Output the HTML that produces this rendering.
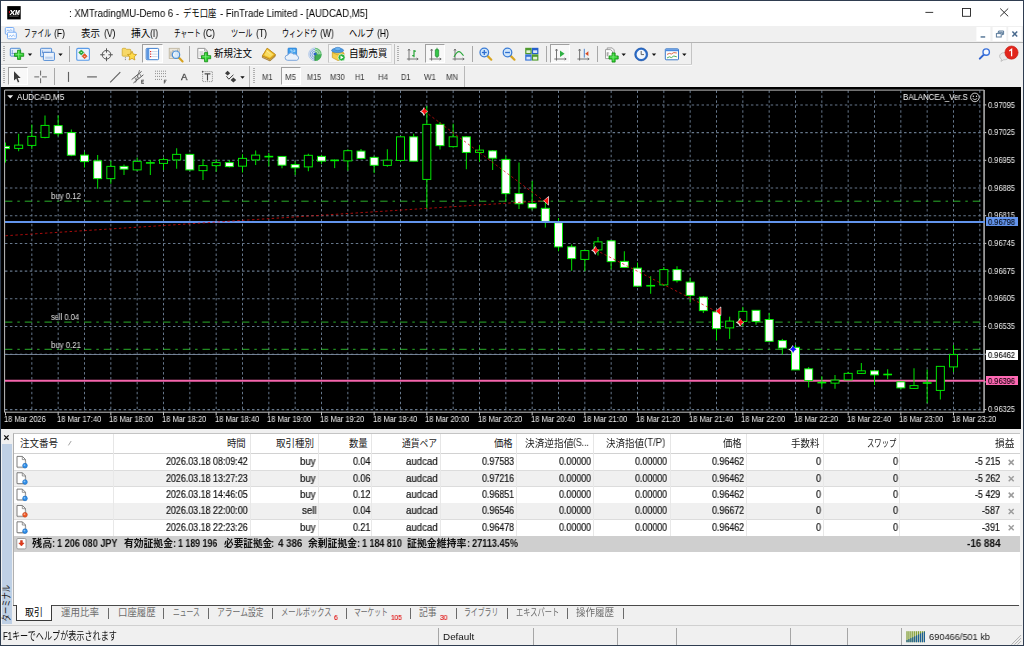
<!DOCTYPE html><html lang="ja"><head><meta charset="utf-8"><title>MetaTrader 4 - AUDCAD,M5</title><style>
html,body{margin:0;padding:0}
body{width:1024px;height:646px;position:relative;overflow:hidden;background:#f0f0f0;font-family:"Liberation Sans",sans-serif;}
.t{position:absolute;white-space:pre;transform-origin:0 50%;will-change:transform;}
.j{position:absolute;white-space:pre;transform-origin:0 50%;font-family:"Liberation Sans","Noto Sans CJK JP",sans-serif;}
.abs{position:absolute}
.ic{position:absolute;overflow:visible;display:block}
.vsep{position:absolute;width:1px;background:#a8a8a8}
.grip{position:absolute;width:2px;background:repeating-linear-gradient(to bottom,#b0b0b0 0,#b0b0b0 1px,transparent 1px,transparent 2px)}
.pressed{position:absolute;background:#f8f8f8;border-top:1px solid #a0a0a0;border-left:1px solid #a0a0a0;border-right:1px solid #fff;border-bottom:1px solid #fff;box-sizing:border-box}
</style></head><body>
<div class="abs" style="left:0.00px;top:0.00px;width:1024.00px;height:646.00px;background:#f0f0f0;"></div>
<div class="abs" style="left:0.00px;top:0.00px;width:1024.00px;height:25.50px;background:#ffffff;"></div>
<svg class="ic" style="left:7px;top:5.5px" width="14" height="14" viewBox="0 0 14 14"><rect x="0.2" y="0.1" width="13.5" height="13.3" fill="#000"/><path d="M3.0 4.1 L4.6 4.1 L5.6 5.7 L7.2 4.1 L8.6 4.1 L6.4 6.5 L7.8 8.9 L6.2 8.9 L5.3 7.3 L3.8 8.9 L2.3 8.9 L4.6 6.4 Z" fill="#fff"/><path d="M7.9 8.9 L8.8 4.1 L10.1 4.1 L10.4 6.7 L11.7 4.1 L13 4.1 L12.1 8.9 L11.1 8.9 L11.7 6 L10.3 8.9 L9.6 8.9 L9.3 6 L8.8 8.9 Z" fill="#fff"/><rect x="1.9" y="5" width="1" height="2.2" fill="#e01020"/><rect x="2.4" y="9.7" width="9.2" height="0.7" fill="#8a8a8a"/></svg>
<span class="t " style="left:69.30px;top:8.94px;font-size:10.30px;line-height:10.30px;color:#000;transform:scaleX(0.9369);">: XMTradingMU-Demo 6 -</span>
<span class="j" style="left:183.40px;top:8.89px;font-size:9.70px;line-height:9.70px;color:#000;transform:scaleX(0.861);">デモ口座</span>
<span class="t " style="left:220.00px;top:8.94px;font-size:10.30px;line-height:10.30px;color:#000;transform:scaleX(0.9311);">- FinTrade Limited - [AUDCAD,M5]</span>
<svg class="ic" style="left:915px;top:1px" width="108" height="24" viewBox="0 0 108 24"><path d="M10.4 11.4 H18.2" stroke="#222" stroke-width="0.9" fill="none"/><rect x="47.5" y="7.5" width="8" height="7.8" stroke="#222" stroke-width="0.9" fill="none"/><path d="M85.2 7.5 L93.2 15.3 M93.2 7.5 L85.2 15.3" stroke="#222" stroke-width="0.95" fill="none"/></svg>
<div class="abs" style="left:0.00px;top:25.50px;width:1024.00px;height:16.80px;background:#f0f0f0;"></div>
<div class="abs" style="left:0.00px;top:42.20px;width:1024.00px;height:0.90px;background:#b4b4b4;"></div>
<svg class="ic" style="left:4px;top:26px" width="14" height="15" viewBox="0 0 14 15"><rect x="1.3" y="1.5" width="8.6" height="6.8" rx="1.1" fill="#f4f8ff" stroke="#5b9bf2" stroke-width="0.8"/><path d="M2.6 5.4 l1.4 -1.6 l1.4 1.4 l1.4 -1.7 l1.6 1.6" stroke="#6aa3f0" stroke-width="0.7" fill="none"/><rect x="3.5" y="6.2" width="8.8" height="6.6" rx="1.1" fill="#f8fbff" stroke="#5b9bf2" stroke-width="0.8"/><path d="M4.9 10.9 l1.4 -1.7 l1.4 1.5 l1.5 -1.8 l1.6 1.5" stroke="#6aa3f0" stroke-width="0.7" fill="none"/></svg>
<span class="j" style="left:23.80px;top:29.02px;font-size:9.90px;line-height:9.90px;color:#000;transform:scaleX(0.687);">ファイル</span>
<span class="t " style="left:54.28px;top:28.94px;font-size:10.30px;line-height:10.30px;color:#000;transform:scaleX(0.8300);">(F)</span>
<span class="j" style="left:81.00px;top:29.02px;font-size:9.90px;line-height:9.90px;color:#000;transform:scaleX(0.960);">表示</span>
<span class="t " style="left:103.60px;top:28.94px;font-size:10.30px;line-height:10.30px;color:#000;transform:scaleX(0.8300);">(V)</span>
<span class="j" style="left:131.00px;top:29.02px;font-size:9.90px;line-height:9.90px;color:#000;transform:scaleX(0.990);">挿入</span>
<span class="t " style="left:150.43px;top:28.94px;font-size:10.30px;line-height:10.30px;color:#000;transform:scaleX(0.8300);">(I)</span>
<span class="j" style="left:173.50px;top:29.02px;font-size:9.90px;line-height:9.90px;color:#000;transform:scaleX(0.677);">チャート</span>
<span class="t " style="left:203.13px;top:28.94px;font-size:10.30px;line-height:10.30px;color:#000;transform:scaleX(0.8300);">(C)</span>
<span class="j" style="left:231.00px;top:29.02px;font-size:9.90px;line-height:9.90px;color:#000;transform:scaleX(0.727);">ツール</span>
<span class="t " style="left:255.58px;top:28.94px;font-size:10.30px;line-height:10.30px;color:#000;transform:scaleX(0.8300);">(T)</span>
<span class="j" style="left:281.50px;top:29.02px;font-size:9.90px;line-height:9.90px;color:#000;transform:scaleX(0.715);">ウィンドウ</span>
<span class="t " style="left:319.74px;top:28.94px;font-size:10.30px;line-height:10.30px;color:#000;transform:scaleX(0.8300);">(W)</span>
<span class="j" style="left:349.00px;top:29.02px;font-size:9.90px;line-height:9.90px;color:#000;transform:scaleX(0.828);">ヘルプ</span>
<span class="t " style="left:377.13px;top:28.94px;font-size:10.30px;line-height:10.30px;color:#000;transform:scaleX(0.8300);">(H)</span>
<svg class="ic" style="left:975px;top:26px" width="48" height="16" viewBox="0 0 48 16"><rect x="1.4" y="1" width="14" height="14" fill="#fff"/><rect x="17.6" y="1" width="13.8" height="14" fill="#fff"/><rect x="33.2" y="1" width="13.4" height="14" fill="#fff"/><rect x="5.6" y="10.2" width="4.6" height="1.5" fill="#5a7a9a"/><path d="M22.6 6.3 H27.4 V9.2 M23.6 6.3 V5 H28.6 V8.4 H27.4" stroke="#5a7a9a" stroke-width="1" fill="none"/><rect x="21.4" y="7.6" width="4.8" height="3.4" fill="#fff" stroke="#5a7a9a" stroke-width="1"/><path d="M37.4 5.6 L42.2 10.6 M42.2 5.6 L37.4 10.6" stroke="#4a6a8e" stroke-width="1.5" fill="none"/></svg>
<div class="abs" style="left:0.00px;top:43.10px;width:1024.00px;height:43.80px;background:#f0f0f0;"></div>
<div class="abs" style="left:0.00px;top:64.00px;width:692.00px;height:0.90px;background:#d2d2d2;"></div>
<div class="abs" style="left:0.00px;top:64.90px;width:692.00px;height:0.80px;background:#fbfbfb;"></div>
<div class="abs" style="left:691.40px;top:43.30px;width:0.90px;height:21.20px;background:#c4c4c4;"></div>
<div class="abs" style="left:249.30px;top:66.00px;width:0.90px;height:20.50px;background:#b8b8b8;"></div>
<div class="abs" style="left:464.20px;top:66.00px;width:0.90px;height:20.50px;background:#b8b8b8;"></div>
<div class="abs" style="left:393.50px;top:44.00px;width:0.90px;height:19.50px;background:#c0c0c0;"></div>
<div class="pressed" style="left:142.30px;top:44.40px;width:20.70px;height:18.20px"></div>
<div class="pressed" style="left:424.80px;top:44.40px;width:20.30px;height:18.20px"></div>
<div class="pressed" style="left:550.30px;top:44.40px;width:20.20px;height:18.20px"></div>
<div class="pressed" style="left:7.50px;top:66.50px;width:20.30px;height:18.40px"></div>
<div class="pressed" style="left:281.00px;top:66.50px;width:20.00px;height:18.50px"></div>
<div class="abs" style="left:328.1px;top:44.1px;width:64.2px;height:18.7px;box-sizing:border-box;background:#f6f6f6;border:1px solid #c6c6c6;border-right-color:#e4e4e4;border-bottom-color:#e4e4e4"></div>
<div class="grip" style="left:3.0px;top:46.0px;height:15.5px"></div>
<div class="grip" style="left:397.0px;top:46.2px;height:15.8px"></div>
<div class="grip" style="left:3.0px;top:67.5px;height:16.5px"></div>
<div class="grip" style="left:253.0px;top:68.0px;height:16.0px"></div>
<div class="vsep" style="left:69.2px;top:45.6px;height:16.9px"></div>
<div class="vsep" style="left:189.3px;top:45.6px;height:16.9px"></div>
<div class="vsep" style="left:471.7px;top:45.6px;height:16.9px"></div>
<div class="vsep" style="left:545.8px;top:45.6px;height:16.9px"></div>
<div class="vsep" style="left:597.1px;top:45.6px;height:16.9px"></div>
<div class="vsep" style="left:54.3px;top:67.8px;height:17.0px"></div>
<svg class="ic" style="left:0;top:43px" width="1024" height="44" viewBox="0 43 1024 44"><rect x="10.3" y="48.3" width="10" height="7.8" rx="0.8" fill="#e6effc" stroke="#3f7fcf" stroke-width="0.9"/><path d="M12.3 50 v4.5 M11.5 53.5 h3.5" stroke="#5a8ad0" stroke-width="0.7" fill="none"/><path d="M17.55 50.20 h3.10 v3.05 h3.05 v3.10 h-3.05 v3.05 h-3.10 v-3.05 h-3.05 v-3.10 h3.05 z" fill="#2fd02f" stroke="#128a12" stroke-width="0.8" stroke-linejoin="round"/><path d="M18.60 51.10 v7.00 M15.40 54.30 h7.00" stroke="#9af09a" stroke-width="0.7" fill="none" opacity=".8"/><path d="M27.80 53.50 h4.4 l-2.2 2.4z" fill="#111"/><rect x="40.6" y="48.3" width="11" height="8.4" rx="0.8" fill="#dfeafa" stroke="#3f7fcf" stroke-width="0.9"/><rect x="43.4" y="52.3" width="11" height="8.1" rx="0.8" fill="#edf3fc" stroke="#3f7fcf" stroke-width="0.9"/><path d="M42.6 50.3 v3 M42 52.4 h7.5" stroke="#5a8ad0" stroke-width="0.7" fill="none"/><rect x="45.2" y="56.6" width="7.4" height="2.2" fill="#b9cfee"/><path d="M58.30 53.50 h4.4 l-2.2 2.4z" fill="#111"/><rect x="76.7" y="48.4" width="12.7" height="11.9" rx="1.3" fill="#eaf2fd" stroke="#5a9be8" stroke-width="1.1"/><path d="M81.3 49.9 l2.6 2.6 l-2.6 2.6 l-2.6 -2.6z" fill="#22b034" stroke="#158a24" stroke-width="0.5"/><path d="M80.3 52.9 l1 -1.2 l1 1.2z" fill="#c8f8c8"/><path d="M84.6 53.6 l2.6 2.6 l-2.6 2.6 l-2.6 -2.6z" fill="#ea5a26" stroke="#c23c10" stroke-width="0.5"/><path d="M83.6 55.9 l1 1.2 l1 -1.2z" fill="#ffd8c8"/><circle cx="106.5" cy="54.75" r="4.3" fill="none" stroke="#555" stroke-width="1"/><path d="M106.5 48.3 v4.4 M106.5 56.8 v4.4 M100.2 54.75 h4.4 M108.4 54.75 h4.4" stroke="#555" stroke-width="1" fill="none"/><path d="M122.2 49.2 q0-0.9 0.9-0.9 h2.4 l0.9 1 h3.6 q0.8 0 0.8 0.8 v5.3 q0 0.8 -0.8 0.8 h-7 q-0.8 0-0.8-0.8z" fill="#f7d868" stroke="#c9a227" stroke-width="0.7"/><path d="M125.4 57.3 v3.6" stroke="#666" stroke-width="0.8" stroke-dasharray="1 0.8" fill="none"/><path d="M132 51.2 l1.4 3 l3.2 0.4 l-2.4 2.2 l0.7 3.2 l-2.9 -1.6 l-2.9 1.6 l0.7 -3.2 l-2.4 -2.2 l3.2 -0.4z" fill="#ffdc4a" stroke="#c9971a" stroke-width="0.8" stroke-linejoin="round"/><rect x="146.2" y="48.4" width="12.4" height="11.3" rx="0.9" fill="#fff" stroke="#3f7fcf" stroke-width="1"/><rect x="146.7" y="48.9" width="2.6" height="10.3" fill="#5d97e0"/><path d="M151.6 51.6 h6 M151.6 54.1 h6 M151.6 56.6 h6" stroke="#b4c6e0" stroke-width="0.7" fill="none"/><rect x="150" y="51" width="1.2" height="1.2" fill="#e03030"/><rect x="150" y="53.5" width="1.2" height="1.2" fill="#e03030"/><rect x="150" y="56" width="1.2" height="1.2" fill="#e03030"/><rect x="169.2" y="48.3" width="10" height="10.2" fill="#ece6d8" stroke="#b9b09a" stroke-width="0.8"/><path d="M171 56.5 v-5 M173 56.5 v-6.5 M177.6 56.5 v-7" stroke="#8a8a8a" stroke-width="0.7" fill="none"/><path d="M178.8 57.6 L182.6 61.4" stroke="#d6a11e" stroke-width="2.1" stroke-linecap="round" fill="none"/><circle cx="176" cy="54.7" r="3.7" fill="#d6ebff" fill-opacity=".85" stroke="#4a90d8" stroke-width="1.2"/><path d="M175 52.6 a2.4 2.4 0 0 0 -1 3.4" stroke="#fff" stroke-width="0.8" fill="none"/><path d="M197.8 48.4 h7 l2.6 2.5 v7.6 h-9.6z" fill="#fdfdfd" stroke="#8c8c8c" stroke-width="0.9"/><path d="M204.6 48.5 v2.6 h2.7" fill="none" stroke="#8c8c8c" stroke-width="0.7"/><path d="M199.4 52 h4 M199.4 54 h5 M199.4 56 h3" stroke="#9a9a9a" stroke-width="0.7" fill="none"/><path d="M204.55 52.60 h3.10 v3.05 h3.05 v3.10 h-3.05 v3.05 h-3.10 v-3.05 h-3.05 v-3.10 h3.05 z" fill="#2fd02f" stroke="#128a12" stroke-width="0.8" stroke-linejoin="round"/><path d="M205.60 53.50 v7.00 M202.40 56.70 h7.00" stroke="#9af09a" stroke-width="0.7" fill="none" opacity=".8"/><path d="M267.2 48.2 L275.4 54.6 L275.2 56.4 L270 61 L262.3 57.6 L262.4 55.8 Z" fill="#a97a1e" stroke="#8e6210" stroke-width="0.5" stroke-linejoin="round"/><path d="M263 57 L270 60 L274.8 55.8" stroke="#e8d9a8" stroke-width="0.5" fill="none"/><path d="M267.2 48.2 L275.4 54.6 L270 59.2 L262.4 55.8 Z" fill="#ecb926" stroke="#c08a12" stroke-width="0.6" stroke-linejoin="round"/><path d="M267.3 49.6 L273.4 54.4 L269.8 57.4 L264.2 55 Z" fill="#f8dc62"/><path d="M266.4 50.6 L270.6 54 " stroke="#fff3b0" stroke-width="0.9" fill="none" opacity=".8"/><rect x="288" y="48.1" width="8.6" height="7.6" rx="0.8" fill="#3fa0ee" stroke="#2878d0" stroke-width="0.7"/><path d="M290 50 h2 v3.6 M293.2 50 h1.6 v1.6 h-1.6" stroke="#d8f0ff" stroke-width="0.7" fill="none"/><path d="M287.6 60.3 a2.6 2.6 0 0 1 0.2 -5.2 a3.2 3.2 0 0 1 5.6 -1 a2.6 2.6 0 0 1 3.4 1.4 a2.5 2.5 0 0 1 0 4.8z" fill="#eaf1fa" stroke="#6f9ed8" stroke-width="0.9"/><circle cx="315.1" cy="54.3" r="6.5" fill="#dfe8f4"/><path d="M315.1 47.8 a6.5 6.5 0 0 1 0 13 z" fill="#62bd70"/><path d="M315.1 54.3 L321.6 54.3 A6.5 6.5 0 0 1 315.1 60.8 Z" fill="#3fae52"/><path d="M315.1 49.4 a4.9 4.9 0 0 0 0 9.8 M315.1 51.1 a3.2 3.2 0 0 0 0 6.4" stroke="#7ea6dc" stroke-width="1" fill="none"/><path d="M315.1 47.9 a6.4 6.4 0 0 0 0 12.8" stroke="#a9c3e6" stroke-width="0.8" fill="none"/><path d="M315.1 49.4 a4.9 4.9 0 0 1 4.9 4.9 M315.1 51.1 a3.2 3.2 0 0 1 3.2 3.2" stroke="#c4e8ca" stroke-width="0.9" fill="none"/><circle cx="315.1" cy="54" r="1.6" fill="#2a62c8"/><path d="M315 55.2 v5.5" stroke="#2c8a40" stroke-width="1.1"/><path d="M332.3 52.5 L338.4 50.6 L344 53 L344 58.2 L338 60.6 L332.3 57.6 Z" fill="#f4cf4c" stroke="#c79a1c" stroke-width="0.7"/><path d="M332.3 52.5 L338 55 L344 53" stroke="#c79a1c" stroke-width="0.6" fill="none"/><ellipse cx="337.6" cy="50.4" rx="6" ry="2.3" fill="#4e9be0" stroke="#2c72c0" stroke-width="0.6"/><ellipse cx="337.8" cy="49" rx="3.2" ry="1.7" fill="#6cb2ee" stroke="#2c72c0" stroke-width="0.5"/><circle cx="341.6" cy="57.4" r="3.5" fill="#27b33a" stroke="#fff" stroke-width="0.6"/><path d="M340.5 55.6 v3.6 l3 -1.8z" fill="#fff"/><path d="M409 49.2 V60.6 M406.9 59 H418 M408 50.6 l1-1.6 l1 1.6 M416.6 58 l1.6 1 l-1.6 1" stroke="#666" stroke-width="0.9" fill="none"/><path d="M414 50 V57.2 M412.2 55.6 H414 M414 51.2 H415.9" stroke="#27a538" stroke-width="1.2" fill="none"/><path d="M431.6 49.2 V60.6 M429.4 59 H441 M430.6 50.6 l1-1.6 l1 1.6 M439.6 58 l1.6 1 l-1.6 1" stroke="#666" stroke-width="0.9" fill="none"/><path d="M437 47.8 V58" stroke="#1c8a2c" stroke-width="0.9"/><rect x="435.3" y="49.6" width="3.4" height="6.8" rx="0.6" fill="#35c648" stroke="#1c8a2c" stroke-width="0.7"/><path d="M455 49.2 V60.6 M452.6 59 H464 M454 50.6 l1-1.6 l1 1.6 M462.6 58 l1.6 1 l-1.6 1" stroke="#666" stroke-width="0.9" fill="none"/><path d="M454 57 C456 53 457.6 51.4 459.2 51.6 S462 54 463.6 55.6" stroke="#27a538" stroke-width="1.1" fill="none"/><path d="M487.70 56.10 L491.30 59.70" stroke="#d8a522" stroke-width="2.2" stroke-linecap="round"/><circle cx="484.30" cy="52.50" r="4.3" fill="#cfe6fb" stroke="#3a7bd5" stroke-width="1.25"/><path d="M481.90 52.50 h4.8" stroke="#2f6fd0" stroke-width="1.3"/><path d="M484.30 50.10 v4.8" stroke="#2f6fd0" stroke-width="1.3"/><path d="M510.90 56.10 L514.50 59.70" stroke="#d8a522" stroke-width="2.2" stroke-linecap="round"/><circle cx="507.50" cy="52.50" r="4.3" fill="#cfe6fb" stroke="#3a7bd5" stroke-width="1.25"/><path d="M505.10 52.50 h4.8" stroke="#2f6fd0" stroke-width="1.3"/><rect x="525.2" y="47.8" width="6.5" height="6.3" fill="#4f9a2e"/><rect x="526.4" y="50.3" width="4.1" height="2.7" fill="#e4f3d6"/><rect x="531.9" y="47.8" width="6.5" height="6.3" fill="#2660cc"/><rect x="533.1" y="50.3" width="4.1" height="2.7" fill="#d6e4fa"/><rect x="525.2" y="54.3" width="6.5" height="6.3" fill="#3572d6"/><rect x="526.4" y="56.8" width="4.1" height="2.7" fill="#d6e4fa"/><rect x="531.9" y="54.3" width="6.5" height="6.3" fill="#4f9a2e"/><rect x="533.1" y="56.8" width="4.1" height="2.7" fill="#e4f3d6"/><path d="M556.5 49.2 V60.6 M554.3 59 H566 M555.5 50.6 l1-1.6 l1 1.6 M564.6 58 l1.6 1 l-1.6 1" stroke="#666" stroke-width="0.9" fill="none"/><path d="M560 50.4 V57 L564.6 53.7z" fill="#2fb044"/><path d="M579.6 49.2 V60.6 M577.4 59 H589 M578.6 50.6 l1-1.6 l1 1.6 M587.6 58 l1.6 1 l-1.6 1" stroke="#666" stroke-width="0.9" fill="none"/><path d="M584.3 48.8 V57.6" stroke="#3a78c8" stroke-width="0.9"/><path d="M585.2 53.7 l3.2 -2.4 v4.8z" fill="#d84a20"/><path d="M607.2 47.9 h5 l2 2 v6.8 h-7z" fill="#f2f2f2" stroke="#8c8c8c" stroke-width="0.8"/><path d="M605.5 49.6 h5 l2 2 v7 h-7z" fill="#fdfdfd" stroke="#8c8c8c" stroke-width="0.8"/><path d="M607.2 52.4 v4 M607.2 53 h2 M607.2 55 h1.6" stroke="#777" stroke-width="0.7" fill="none"/><path d="M612.05 52.90 h3.10 v3.05 h3.05 v3.10 h-3.05 v3.05 h-3.10 v-3.05 h-3.05 v-3.10 h3.05 z" fill="#2fd02f" stroke="#128a12" stroke-width="0.8" stroke-linejoin="round"/><path d="M613.10 53.80 v7.00 M609.90 57.00 h7.00" stroke="#9af09a" stroke-width="0.7" fill="none" opacity=".8"/><path d="M621.50 53.50 h4.4 l-2.2 2.4z" fill="#111"/><circle cx="641.2" cy="54.4" r="5.6" fill="#f2f7fd" stroke="#2a6cc8" stroke-width="2"/><circle cx="641.2" cy="54.4" r="6.5" fill="none" stroke="#1a4a98" stroke-width="0.5"/><path d="M641.2 51 V54.6 H644" stroke="#555" stroke-width="0.9" fill="none"/><path d="M651.80 53.50 h4.4 l-2.2 2.4z" fill="#111"/><rect x="665.3" y="48.8" width="13.2" height="11" rx="0.8" fill="#fdfdfd" stroke="#3a78c8" stroke-width="1"/><rect x="665.8" y="49.3" width="12.2" height="1.9" fill="#4a8ae0"/><path d="M667 54.4 l2.4 -1 l2 0.6 l2.4 -1.4 l3 0.4" stroke="#d85a38" stroke-width="0.9" fill="none"/><path d="M667 58 l2.4 -1.2 l2 0.8 l2.4 -1.6 l3 0.8" stroke="#3aa848" stroke-width="0.9" fill="none"/><path d="M682.10 53.50 h4.4 l-2.2 2.4z" fill="#111"/><path d="M983.8 54.6 L979.8 58.6" stroke="#2f63d0" stroke-width="2" stroke-linecap="round"/><circle cx="986.2" cy="52.1" r="3.2" fill="#f6f9ff" stroke="#3a72dc" stroke-width="1.4"/><path d="M999.6 56.4 a4.6 3.6 0 1 1 4 3.4 l-2.6 1.6 l0.6 -2.2 a4 3.4 0 0 1 -2 -2.8z" fill="#e9e9e9" stroke="#b9b9b9" stroke-width="0.8"/><circle cx="1011.5" cy="52.6" r="6.6" fill="#e2261c"/><circle cx="1011.5" cy="52.6" r="6.6" fill="none" stroke="#c01810" stroke-width="0.6"/><path d="M1009.3 51 L1011.6 49.2 V56.2" stroke="#fff" stroke-width="1.25" fill="none" stroke-linejoin="miter"/><path d="M14 71.2 V80.6 L16.3 78.5 L17.9 82.4 L19.3 81.8 L17.7 78 L20.7 78 Z" fill="#3c3c3c"/><path d="M40.6 70.6 v4.9 M40.6 78.3 v4.9 M34.3 76.9 h4.9 M42 76.9 h4.9" stroke="#666" stroke-width="1" fill="none"/><path d="M68.5 71.9 V81.9" stroke="#606060" stroke-width="1.15"/><path d="M87.1 76.9 H96.9" stroke="#606060" stroke-width="1.15"/><path d="M110.2 82.3 L120.3 72.2" stroke="#606060" stroke-width="1.15"/><path d="M131.6 79.6 L141.6 71.4 M133.4 83 L143.4 74.8" stroke="#5c5c5c" stroke-width="1" fill="none"/><path d="M134.6 77.2 l1.8 3.4 M137 75.2 l1.8 3.4 M139.4 73.2 l1.8 3.4 M139.6 70 l-4 12.6" stroke="#6a6a6a" stroke-width="0.8" fill="none"/><path d="M141.4 80.2 h2.6 M141.4 81.8 h2.2 M141.4 83.4 h2.6 M141.7 80.2 v3.2" stroke="#444" stroke-width="0.8" fill="none"/><path d="M155 71.2 H166 M155 73.6 H166 M155 76.4 H166 M155 79.4 H163" stroke="#7c7c7c" stroke-width="0.85" stroke-dasharray="1 1" fill="none"/><path d="M164 80.2 h2.6 M164 81.8 h2 M164.3 80.2 v3.4" stroke="#444" stroke-width="0.8" fill="none"/><rect x="202.6" y="71.6" width="9.8" height="10" fill="none" stroke="#808080" stroke-width="0.9" stroke-dasharray="1 1"/><path d="M204.6 73.9 h5.8 M207.5 73.9 v6.6" stroke="#484848" stroke-width="1.1" fill="none"/><circle cx="202.6" cy="71.6" r="0.8" fill="#555"/><path d="M227.6 70.8 l2.6 2.4 l-2.6 2.4 l-2.6 -2.4z M233.4 77.4 l2.8 2.5 l-2.8 2.5 l-2.8 -2.5z" fill="#3e3e3e"/><path d="M226.4 76.2 l2.4 3 l4.6 -4.4" stroke="#3e3e3e" stroke-width="1" fill="none"/><path d="M240.30 76.30 h4.4 l-2.2 2.4z" fill="#111"/></svg>
<span class="j" style="left:213.90px;top:48.92px;font-size:9.90px;line-height:9.90px;color:#000;transform:scaleX(0.960);">新規注文</span>
<span class="j" style="left:349.40px;top:49.02px;font-size:9.90px;line-height:9.90px;color:#000;transform:scaleX(0.970);">自動売買</span>
<span class="t " style="left:180.90px;top:72.23px;font-size:9.90px;line-height:9.90px;color:#3c3c3c;-webkit-text-stroke:0.30px #3c3c3c;transform:scaleX(0.9541);">A</span>
<span class="t " style="left:262.00px;top:72.80px;font-size:8.30px;line-height:8.30px;color:#363636;transform:scaleX(0.9107);">M1</span>
<span class="t " style="left:284.90px;top:72.80px;font-size:8.30px;line-height:8.30px;color:#363636;transform:scaleX(0.9540);">M5</span>
<span class="t " style="left:306.75px;top:72.80px;font-size:8.30px;line-height:8.30px;color:#363636;transform:scaleX(0.8764);">M15</span>
<span class="t " style="left:329.60px;top:72.80px;font-size:8.30px;line-height:8.30px;color:#363636;transform:scaleX(0.9073);">M30</span>
<span class="t " style="left:355.00px;top:72.80px;font-size:8.30px;line-height:8.30px;color:#363636;transform:scaleX(0.8859);">H1</span>
<span class="t " style="left:377.50px;top:72.80px;font-size:8.30px;line-height:8.30px;color:#363636;transform:scaleX(0.9425);">H4</span>
<span class="t " style="left:401.25px;top:72.80px;font-size:8.30px;line-height:8.30px;color:#363636;transform:scaleX(0.8812);">D1</span>
<span class="t " style="left:423.75px;top:72.80px;font-size:8.30px;line-height:8.30px;color:#363636;transform:scaleX(0.9518);">W1</span>
<span class="t " style="left:446.00px;top:72.80px;font-size:8.30px;line-height:8.30px;color:#363636;transform:scaleX(0.9297);">MN</span>
<div class="abs" style="left:1.00px;top:87.20px;width:1020.40px;height:341.40px;background:#000;"></div>
<svg class="ic" style="left:0;top:86px" width="1024" height="344" viewBox="0 86 1024 344"><path d="M31.83 90.5 V412" stroke="#66778b" stroke-width="1" stroke-dasharray="2.47 2.47" fill="none"/><path d="M58.17 90.5 V412" stroke="#66778b" stroke-width="1" stroke-dasharray="2.47 2.47" fill="none"/><path d="M84.50 90.5 V412" stroke="#66778b" stroke-width="1" stroke-dasharray="2.47 2.47" fill="none"/><path d="M110.83 90.5 V412" stroke="#66778b" stroke-width="1" stroke-dasharray="2.47 2.47" fill="none"/><path d="M137.17 90.5 V412" stroke="#66778b" stroke-width="1" stroke-dasharray="2.47 2.47" fill="none"/><path d="M163.50 90.5 V412" stroke="#66778b" stroke-width="1" stroke-dasharray="2.47 2.47" fill="none"/><path d="M189.83 90.5 V412" stroke="#66778b" stroke-width="1" stroke-dasharray="2.47 2.47" fill="none"/><path d="M216.17 90.5 V412" stroke="#66778b" stroke-width="1" stroke-dasharray="2.47 2.47" fill="none"/><path d="M242.50 90.5 V412" stroke="#66778b" stroke-width="1" stroke-dasharray="2.47 2.47" fill="none"/><path d="M268.83 90.5 V412" stroke="#66778b" stroke-width="1" stroke-dasharray="2.47 2.47" fill="none"/><path d="M295.17 90.5 V412" stroke="#66778b" stroke-width="1" stroke-dasharray="2.47 2.47" fill="none"/><path d="M321.50 90.5 V412" stroke="#66778b" stroke-width="1" stroke-dasharray="2.47 2.47" fill="none"/><path d="M347.83 90.5 V412" stroke="#66778b" stroke-width="1" stroke-dasharray="2.47 2.47" fill="none"/><path d="M374.17 90.5 V412" stroke="#66778b" stroke-width="1" stroke-dasharray="2.47 2.47" fill="none"/><path d="M400.50 90.5 V412" stroke="#66778b" stroke-width="1" stroke-dasharray="2.47 2.47" fill="none"/><path d="M426.83 90.5 V412" stroke="#66778b" stroke-width="1" stroke-dasharray="2.47 2.47" fill="none"/><path d="M453.17 90.5 V412" stroke="#66778b" stroke-width="1" stroke-dasharray="2.47 2.47" fill="none"/><path d="M479.50 90.5 V412" stroke="#66778b" stroke-width="1" stroke-dasharray="2.47 2.47" fill="none"/><path d="M505.83 90.5 V412" stroke="#66778b" stroke-width="1" stroke-dasharray="2.47 2.47" fill="none"/><path d="M532.17 90.5 V412" stroke="#66778b" stroke-width="1" stroke-dasharray="2.47 2.47" fill="none"/><path d="M558.50 90.5 V412" stroke="#66778b" stroke-width="1" stroke-dasharray="2.47 2.47" fill="none"/><path d="M584.83 90.5 V412" stroke="#66778b" stroke-width="1" stroke-dasharray="2.47 2.47" fill="none"/><path d="M611.17 90.5 V412" stroke="#66778b" stroke-width="1" stroke-dasharray="2.47 2.47" fill="none"/><path d="M637.50 90.5 V412" stroke="#66778b" stroke-width="1" stroke-dasharray="2.47 2.47" fill="none"/><path d="M663.84 90.5 V412" stroke="#66778b" stroke-width="1" stroke-dasharray="2.47 2.47" fill="none"/><path d="M690.17 90.5 V412" stroke="#66778b" stroke-width="1" stroke-dasharray="2.47 2.47" fill="none"/><path d="M716.50 90.5 V412" stroke="#66778b" stroke-width="1" stroke-dasharray="2.47 2.47" fill="none"/><path d="M742.84 90.5 V412" stroke="#66778b" stroke-width="1" stroke-dasharray="2.47 2.47" fill="none"/><path d="M769.17 90.5 V412" stroke="#66778b" stroke-width="1" stroke-dasharray="2.47 2.47" fill="none"/><path d="M795.50 90.5 V412" stroke="#66778b" stroke-width="1" stroke-dasharray="2.47 2.47" fill="none"/><path d="M821.84 90.5 V412" stroke="#66778b" stroke-width="1" stroke-dasharray="2.47 2.47" fill="none"/><path d="M848.17 90.5 V412" stroke="#66778b" stroke-width="1" stroke-dasharray="2.47 2.47" fill="none"/><path d="M874.50 90.5 V412" stroke="#66778b" stroke-width="1" stroke-dasharray="2.47 2.47" fill="none"/><path d="M900.84 90.5 V412" stroke="#66778b" stroke-width="1" stroke-dasharray="2.47 2.47" fill="none"/><path d="M927.17 90.5 V412" stroke="#66778b" stroke-width="1" stroke-dasharray="2.47 2.47" fill="none"/><path d="M953.50 90.5 V412" stroke="#66778b" stroke-width="1" stroke-dasharray="2.47 2.47" fill="none"/><path d="M979.84 90.5 V412" stroke="#66778b" stroke-width="1" stroke-dasharray="2.47 2.47" fill="none"/><path d="M5 104.90 H984" stroke="#66778b" stroke-width="1.05" stroke-dasharray="2.47 2.47" fill="none"/><path d="M5 132.60 H984" stroke="#66778b" stroke-width="1.05" stroke-dasharray="2.47 2.47" fill="none"/><path d="M5 160.30 H984" stroke="#66778b" stroke-width="1.05" stroke-dasharray="2.47 2.47" fill="none"/><path d="M5 188.00 H984" stroke="#66778b" stroke-width="1.05" stroke-dasharray="2.47 2.47" fill="none"/><path d="M5 215.70 H984" stroke="#66778b" stroke-width="1.05" stroke-dasharray="2.47 2.47" fill="none"/><path d="M5 243.40 H984" stroke="#66778b" stroke-width="1.05" stroke-dasharray="2.47 2.47" fill="none"/><path d="M5 271.10 H984" stroke="#66778b" stroke-width="1.05" stroke-dasharray="2.47 2.47" fill="none"/><path d="M5 298.80 H984" stroke="#66778b" stroke-width="1.05" stroke-dasharray="2.47 2.47" fill="none"/><path d="M5 326.50 H984" stroke="#66778b" stroke-width="1.05" stroke-dasharray="2.47 2.47" fill="none"/><path d="M5 354.20 H984" stroke="#66778b" stroke-width="1.05" stroke-dasharray="2.47 2.47" fill="none"/><path d="M5 409.60 H984" stroke="#66778b" stroke-width="1.05" stroke-dasharray="2.47 2.47" fill="none"/><path d="M4.6 412.4 V90.1 H984.2 M4.6 412.2 H984.2" stroke="#d4d4d4" stroke-width="0.9" fill="none"/><path d="M984.1 90.1 V412.6" stroke="#ababab" stroke-width="1.6" fill="none"/><path d="M5 201.20 H984" stroke="#32cd32" stroke-width="0.85" stroke-dasharray="7.4 4.94 2.47 4.94" fill="none"/><path d="M5 322.10 H984" stroke="#32cd32" stroke-width="0.85" stroke-dasharray="7.4 4.94 2.47 4.94" fill="none"/><path d="M5 349.30 H984" stroke="#32cd32" stroke-width="0.85" stroke-dasharray="7.4 4.94 2.47 4.94" fill="none"/><path d="M5 354.5 H984" stroke="#7a8a9f" stroke-width="0.9" fill="none"/><path d="M5 380.8 H985" stroke="#f565ac" stroke-width="1.9" fill="none"/><clipPath id="cclip"><rect x="5" y="90" width="979" height="322"/></clipPath><g clip-path="url(#cclip)"><path d="M5.50 142.50 V162.50" stroke="#00f000" stroke-width="0.95" fill="none"/><rect x="1.50" y="146.35" width="8" height="2.30" fill="#fff" stroke="#00f000" stroke-width="0.95"/><path d="M18.67 133.75 V151.25" stroke="#00f000" stroke-width="0.95" fill="none"/><rect x="14.67" y="145.10" width="8" height="3.30" fill="#000" stroke="#00f000" stroke-width="0.95"/><path d="M31.83 124.50 V149.00" stroke="#00f000" stroke-width="0.95" fill="none"/><rect x="27.83" y="136.35" width="8" height="9.05" fill="#000" stroke="#00f000" stroke-width="0.95"/><path d="M45.00 115.50 V138.30" stroke="#00f000" stroke-width="0.95" fill="none"/><rect x="41.00" y="125.40" width="8" height="12.00" fill="#000" stroke="#00f000" stroke-width="0.95"/><path d="M58.17 115.50 V136.25" stroke="#00f000" stroke-width="0.95" fill="none"/><rect x="54.17" y="125.60" width="8" height="8.05" fill="#fff" stroke="#00f000" stroke-width="0.95"/><path d="M71.33 129.50 V156.20" stroke="#00f000" stroke-width="0.95" fill="none"/><rect x="67.33" y="132.60" width="8" height="22.60" fill="#fff" stroke="#00f000" stroke-width="0.95"/><path d="M84.50 152.00 V167.50" stroke="#00f000" stroke-width="0.95" fill="none"/><rect x="80.50" y="155.10" width="8" height="6.55" fill="#fff" stroke="#00f000" stroke-width="0.95"/><path d="M97.67 155.00 V188.75" stroke="#00f000" stroke-width="0.95" fill="none"/><rect x="93.67" y="160.85" width="8" height="17.80" fill="#fff" stroke="#00f000" stroke-width="0.95"/><path d="M110.83 160.70 V183.80" stroke="#00f000" stroke-width="0.95" fill="none"/><rect x="106.83" y="166.35" width="8" height="12.30" fill="#000" stroke="#00f000" stroke-width="0.95"/><path d="M124.00 164.50 V175.00" stroke="#00f000" stroke-width="0.95" fill="none"/><rect x="120.00" y="166.35" width="8" height="2.80" fill="#fff" stroke="#00f000" stroke-width="0.95"/><path d="M137.17 157.50 V170.75" stroke="#00f000" stroke-width="0.95" fill="none"/><rect x="133.17" y="161.35" width="8" height="8.55" fill="#000" stroke="#00f000" stroke-width="0.95"/><path d="M150.33 160.00 V175.00" stroke="#00f000" stroke-width="0.95" fill="none"/><path d="M145.93 162.90 H154.73" stroke="#00f000" stroke-width="1.6" fill="none"/><path d="M163.50 157.50 V170.00" stroke="#00f000" stroke-width="0.95" fill="none"/><rect x="159.50" y="159.60" width="8" height="3.80" fill="#000" stroke="#00f000" stroke-width="0.95"/><path d="M176.67 148.25 V168.75" stroke="#00f000" stroke-width="0.95" fill="none"/><rect x="172.67" y="154.35" width="8" height="5.55" fill="#000" stroke="#00f000" stroke-width="0.95"/><path d="M189.83 153.75 V170.75" stroke="#00f000" stroke-width="0.95" fill="none"/><rect x="185.83" y="154.35" width="8" height="15.55" fill="#fff" stroke="#00f000" stroke-width="0.95"/><path d="M203.00 159.25 V180.00" stroke="#00f000" stroke-width="0.95" fill="none"/><rect x="199.00" y="165.60" width="8" height="5.05" fill="#000" stroke="#00f000" stroke-width="0.95"/><path d="M216.17 159.25 V171.75" stroke="#00f000" stroke-width="0.95" fill="none"/><rect x="212.17" y="162.60" width="8" height="3.05" fill="#000" stroke="#00f000" stroke-width="0.95"/><path d="M229.33 160.00 V167.50" stroke="#00f000" stroke-width="0.95" fill="none"/><rect x="225.33" y="162.60" width="8" height="4.05" fill="#fff" stroke="#00f000" stroke-width="0.95"/><path d="M242.50 154.25 V172.50" stroke="#00f000" stroke-width="0.95" fill="none"/><rect x="238.50" y="158.35" width="8" height="7.80" fill="#000" stroke="#00f000" stroke-width="0.95"/><path d="M255.67 150.50 V165.00" stroke="#00f000" stroke-width="0.95" fill="none"/><rect x="251.67" y="155.10" width="8" height="4.80" fill="#000" stroke="#00f000" stroke-width="0.95"/><path d="M268.83 153.00 V166.25" stroke="#00f000" stroke-width="0.95" fill="none"/><path d="M264.43 156.60 H273.23" stroke="#00f000" stroke-width="1.6" fill="none"/><path d="M282.00 156.25 V168.25" stroke="#00f000" stroke-width="0.95" fill="none"/><rect x="278.00" y="156.40" width="8" height="8.80" fill="#fff" stroke="#00f000" stroke-width="0.95"/><path d="M295.17 161.25 V175.00" stroke="#00f000" stroke-width="0.95" fill="none"/><rect x="291.17" y="164.60" width="8" height="3.20" fill="#fff" stroke="#00f000" stroke-width="0.95"/><path d="M308.33 153.75 V171.25" stroke="#00f000" stroke-width="0.95" fill="none"/><rect x="304.33" y="155.30" width="8" height="11.60" fill="#000" stroke="#00f000" stroke-width="0.95"/><path d="M321.50 155.00 V164.00" stroke="#00f000" stroke-width="0.95" fill="none"/><rect x="317.50" y="156.35" width="8" height="4.80" fill="#fff" stroke="#00f000" stroke-width="0.95"/><path d="M334.67 159.40 V168.10" stroke="#00f000" stroke-width="0.95" fill="none"/><path d="M330.27 160.40 H339.07" stroke="#00f000" stroke-width="1.6" fill="none"/><path d="M347.83 149.40 V170.60" stroke="#00f000" stroke-width="0.95" fill="none"/><rect x="343.83" y="150.70" width="8" height="10.20" fill="#000" stroke="#00f000" stroke-width="0.95"/><path d="M361.00 149.00 V159.25" stroke="#00f000" stroke-width="0.95" fill="none"/><rect x="357.00" y="151.10" width="8" height="7.30" fill="#fff" stroke="#00f000" stroke-width="0.95"/><path d="M374.17 156.25 V173.10" stroke="#00f000" stroke-width="0.95" fill="none"/><rect x="370.17" y="157.35" width="8" height="7.95" fill="#fff" stroke="#00f000" stroke-width="0.95"/><path d="M387.33 149.25 V166.75" stroke="#00f000" stroke-width="0.95" fill="none"/><rect x="383.33" y="160.10" width="8" height="5.30" fill="#000" stroke="#00f000" stroke-width="0.95"/><path d="M400.50 136.25 V161.75" stroke="#00f000" stroke-width="0.95" fill="none"/><rect x="396.50" y="136.85" width="8" height="23.55" fill="#000" stroke="#00f000" stroke-width="0.95"/><path d="M413.67 133.75 V161.25" stroke="#00f000" stroke-width="0.95" fill="none"/><rect x="409.67" y="136.85" width="8" height="24.30" fill="#fff" stroke="#00f000" stroke-width="0.95"/><path d="M426.83 106.00 V208.75" stroke="#00f000" stroke-width="0.95" fill="none"/><rect x="422.83" y="124.35" width="8" height="55.05" fill="#000" stroke="#00f000" stroke-width="0.95"/><path d="M440.00 122.00 V149.50" stroke="#00f000" stroke-width="0.95" fill="none"/><rect x="436.00" y="124.35" width="8" height="21.30" fill="#fff" stroke="#00f000" stroke-width="0.95"/><path d="M453.17 123.75 V147.50" stroke="#00f000" stroke-width="0.95" fill="none"/><rect x="449.17" y="136.85" width="8" height="9.80" fill="#000" stroke="#00f000" stroke-width="0.95"/><path d="M466.33 136.25 V169.25" stroke="#00f000" stroke-width="0.95" fill="none"/><rect x="462.33" y="136.85" width="8" height="15.55" fill="#fff" stroke="#00f000" stroke-width="0.95"/><path d="M479.50 145.00 V161.75" stroke="#00f000" stroke-width="0.95" fill="none"/><rect x="475.50" y="150.10" width="8" height="2.30" fill="#000" stroke="#00f000" stroke-width="0.95"/><path d="M492.67 150.00 V170.00" stroke="#00f000" stroke-width="0.95" fill="none"/><rect x="488.67" y="150.85" width="8" height="7.30" fill="#fff" stroke="#00f000" stroke-width="0.95"/><path d="M505.83 155.75 V201.75" stroke="#00f000" stroke-width="0.95" fill="none"/><rect x="501.83" y="159.35" width="8" height="34.30" fill="#fff" stroke="#00f000" stroke-width="0.95"/><path d="M519.00 162.50 V209.00" stroke="#00f000" stroke-width="0.95" fill="none"/><rect x="515.00" y="193.60" width="8" height="10.20" fill="#fff" stroke="#00f000" stroke-width="0.95"/><path d="M532.17 180.90 V210.20" stroke="#00f000" stroke-width="0.95" fill="none"/><rect x="528.17" y="203.40" width="8" height="4.50" fill="#fff" stroke="#00f000" stroke-width="0.95"/><path d="M545.33 202.50 V227.50" stroke="#00f000" stroke-width="0.95" fill="none"/><rect x="541.33" y="208.30" width="8" height="13.10" fill="#fff" stroke="#00f000" stroke-width="0.95"/><path d="M558.50 218.00 V251.25" stroke="#00f000" stroke-width="0.95" fill="none"/><rect x="554.50" y="222.70" width="8" height="24.20" fill="#fff" stroke="#00f000" stroke-width="0.95"/><path d="M571.67 244.50 V270.75" stroke="#00f000" stroke-width="0.95" fill="none"/><rect x="567.67" y="246.85" width="8" height="11.80" fill="#fff" stroke="#00f000" stroke-width="0.95"/><path d="M584.83 250.00 V271.25" stroke="#00f000" stroke-width="0.95" fill="none"/><rect x="580.83" y="250.60" width="8" height="8.80" fill="#000" stroke="#00f000" stroke-width="0.95"/><path d="M598.00 237.00 V255.50" stroke="#00f000" stroke-width="0.95" fill="none"/><rect x="594.00" y="241.85" width="8" height="8.05" fill="#000" stroke="#00f000" stroke-width="0.95"/><path d="M611.17 240.00 V269.25" stroke="#00f000" stroke-width="0.95" fill="none"/><rect x="607.17" y="240.85" width="8" height="20.80" fill="#fff" stroke="#00f000" stroke-width="0.95"/><path d="M624.33 251.25 V267.50" stroke="#00f000" stroke-width="0.95" fill="none"/><rect x="620.33" y="261.35" width="8" height="6.05" fill="#fff" stroke="#00f000" stroke-width="0.95"/><path d="M637.50 262.50 V286.75" stroke="#00f000" stroke-width="0.95" fill="none"/><rect x="633.50" y="268.10" width="8" height="18.05" fill="#fff" stroke="#00f000" stroke-width="0.95"/><path d="M650.67 276.25 V293.75" stroke="#00f000" stroke-width="0.95" fill="none"/><path d="M646.27 285.75 H655.07" stroke="#00f000" stroke-width="1.6" fill="none"/><path d="M663.84 267.00 V285.75" stroke="#00f000" stroke-width="0.95" fill="none"/><rect x="659.84" y="269.60" width="8" height="15.30" fill="#000" stroke="#00f000" stroke-width="0.95"/><path d="M677.00 266.25 V282.50" stroke="#00f000" stroke-width="0.95" fill="none"/><rect x="673.00" y="269.60" width="8" height="11.05" fill="#fff" stroke="#00f000" stroke-width="0.95"/><path d="M690.17 277.50 V302.50" stroke="#00f000" stroke-width="0.95" fill="none"/><rect x="686.17" y="282.10" width="8" height="13.30" fill="#fff" stroke="#00f000" stroke-width="0.95"/><path d="M703.34 296.25 V313.00" stroke="#00f000" stroke-width="0.95" fill="none"/><rect x="699.34" y="297.10" width="8" height="13.55" fill="#fff" stroke="#00f000" stroke-width="0.95"/><path d="M716.50 311.80 V340.50" stroke="#00f000" stroke-width="0.95" fill="none"/><rect x="712.50" y="311.90" width="8" height="16.80" fill="#fff" stroke="#00f000" stroke-width="0.95"/><path d="M729.67 316.70 V338.90" stroke="#00f000" stroke-width="0.95" fill="none"/><rect x="725.67" y="321.10" width="8" height="6.80" fill="#000" stroke="#00f000" stroke-width="0.95"/><path d="M742.84 306.90 V326.40" stroke="#00f000" stroke-width="0.95" fill="none"/><rect x="738.84" y="311.35" width="8" height="10.05" fill="#000" stroke="#00f000" stroke-width="0.95"/><path d="M756.00 310.20 V324.80" stroke="#00f000" stroke-width="0.95" fill="none"/><rect x="752.00" y="310.30" width="8" height="11.10" fill="#fff" stroke="#00f000" stroke-width="0.95"/><path d="M769.17 312.90 V341.40" stroke="#00f000" stroke-width="0.95" fill="none"/><rect x="765.17" y="319.50" width="8" height="21.80" fill="#fff" stroke="#00f000" stroke-width="0.95"/><path d="M782.34 338.90 V354.60" stroke="#00f000" stroke-width="0.95" fill="none"/><rect x="778.34" y="340.60" width="8" height="7.40" fill="#fff" stroke="#00f000" stroke-width="0.95"/><path d="M795.50 345.00 V370.00" stroke="#00f000" stroke-width="0.95" fill="none"/><rect x="791.50" y="347.30" width="8" height="22.60" fill="#fff" stroke="#00f000" stroke-width="0.95"/><path d="M808.67 367.00 V387.50" stroke="#00f000" stroke-width="0.95" fill="none"/><rect x="804.67" y="368.85" width="8" height="11.80" fill="#fff" stroke="#00f000" stroke-width="0.95"/><path d="M821.84 376.25 V387.50" stroke="#00f000" stroke-width="0.95" fill="none"/><path d="M817.44 382.60 H826.24" stroke="#00f000" stroke-width="1.6" fill="none"/><path d="M835.00 375.00 V388.75" stroke="#00f000" stroke-width="0.95" fill="none"/><rect x="831.00" y="380.10" width="8" height="3.05" fill="#000" stroke="#00f000" stroke-width="0.95"/><path d="M848.17 371.75 V380.00" stroke="#00f000" stroke-width="0.95" fill="none"/><rect x="844.17" y="373.35" width="8" height="6.55" fill="#000" stroke="#00f000" stroke-width="0.95"/><path d="M861.34 363.00 V373.75" stroke="#00f000" stroke-width="0.95" fill="none"/><rect x="857.34" y="370.85" width="8" height="2.55" fill="#000" stroke="#00f000" stroke-width="0.95"/><path d="M874.50 370.00 V385.00" stroke="#00f000" stroke-width="0.95" fill="none"/><rect x="870.50" y="370.85" width="8" height="4.05" fill="#fff" stroke="#00f000" stroke-width="0.95"/><path d="M887.67 369.25 V379.25" stroke="#00f000" stroke-width="0.95" fill="none"/><path d="M883.27 374.50 H892.07" stroke="#00f000" stroke-width="1.6" fill="none"/><path d="M900.84 381.25 V389.50" stroke="#00f000" stroke-width="0.95" fill="none"/><rect x="896.84" y="381.85" width="8" height="6.05" fill="#fff" stroke="#00f000" stroke-width="0.95"/><path d="M914.00 368.25 V388.75" stroke="#00f000" stroke-width="0.95" fill="none"/><rect x="910.00" y="385.60" width="8" height="2.80" fill="#000" stroke="#00f000" stroke-width="0.95"/><path d="M927.17 369.50 V403.25" stroke="#00f000" stroke-width="0.95" fill="none"/><path d="M922.77 383.00 H931.57" stroke="#00f000" stroke-width="1.6" fill="none"/><path d="M940.34 366.25 V399.50" stroke="#00f000" stroke-width="0.95" fill="none"/><rect x="936.34" y="366.35" width="8" height="24.05" fill="#000" stroke="#00f000" stroke-width="0.95"/><path d="M953.50 345.00 V372.00" stroke="#00f000" stroke-width="0.95" fill="none"/><rect x="949.50" y="354.60" width="8" height="12.30" fill="#000" stroke="#00f000" stroke-width="0.95"/></g><path d="M5 222 H985" stroke="#6294ec" stroke-width="1.95" fill="none"/><path d="M5.50 235.75 L543.75 200.80" stroke="#d81010" stroke-width="0.78" stroke-dasharray="2.47 2.47" fill="none"/><path d="M424.50 111.25 L543.75 200.80" stroke="#d81010" stroke-width="0.78" stroke-dasharray="2.47 2.47" fill="none"/><path d="M595.75 250.00 L716.00 311.25" stroke="#d81010" stroke-width="0.78" stroke-dasharray="2.47 2.47" fill="none"/><path d="M0 -3.6 q0.9 2.7 3.2 3.6 q-2.3 0.9 -3.2 3.6 q-0.9 -2.7 -3.2 -3.6 q2.3 -0.9 3.2 -3.6z" fill="#e4e4e4" transform="translate(423.95 111.60) scale(1.28)"/><path d="M0 -3.6 q0.9 2.7 3.2 3.6 q-2.3 0.9 -3.2 3.6 q-0.9 -2.7 -3.2 -3.6 q2.3 -0.9 3.2 -3.6z" fill="#ff1010" transform="translate(424.50 111.25)"/><path d="M0 -3.6 q0.9 2.7 3.2 3.6 q-2.3 0.9 -3.2 3.6 q-0.9 -2.7 -3.2 -3.6 q2.3 -0.9 3.2 -3.6z" fill="#e4e4e4" transform="translate(595.20 250.35) scale(1.28)"/><path d="M0 -3.6 q0.9 2.7 3.2 3.6 q-2.3 0.9 -3.2 3.6 q-0.9 -2.7 -3.2 -3.6 q2.3 -0.9 3.2 -3.6z" fill="#ff1010" transform="translate(595.75 250.00)"/><path d="M0 -3.6 q0.9 2.7 3.2 3.6 q-2.3 0.9 -3.2 3.6 q-0.9 -2.7 -3.2 -3.6 q2.3 -0.9 3.2 -3.6z" fill="#e4e4e4" transform="translate(740.05 322.45) scale(1.28)"/><path d="M0 -3.6 q0.9 2.7 3.2 3.6 q-2.3 0.9 -3.2 3.6 q-0.9 -2.7 -3.2 -3.6 q2.3 -0.9 3.2 -3.6z" fill="#ff1010" transform="translate(740.60 322.10)"/><path d="M0 -3.6 q0.9 2.7 3.2 3.6 q-2.3 0.9 -3.2 3.6 q-0.9 -2.7 -3.2 -3.6 q2.3 -0.9 3.2 -3.6z" fill="#e4e4e4" transform="translate(792.65 349.55) scale(1.28)"/><path d="M0 -3.6 q0.9 2.7 3.2 3.6 q-2.3 0.9 -3.2 3.6 q-0.9 -2.7 -3.2 -3.6 q2.3 -0.9 3.2 -3.6z" fill="#1010ff" transform="translate(793.20 349.20)"/><path d="M543.75 200.80 L548.55 196.50 V205.10 Z" fill="#ff1010" stroke="#f4f4f4" stroke-width="0.8" stroke-linejoin="round"/><path d="M544.05 200.80 L548.05 197.50 V204.10 Z" fill="#ff1010"/><path d="M716.00 311.25 L720.80 306.95 V315.55 Z" fill="#ff1010" stroke="#f4f4f4" stroke-width="0.8" stroke-linejoin="round"/><path d="M716.30 311.25 L720.30 307.95 V314.55 Z" fill="#ff1010"/><path d="M984.6 104.90 h1.7" stroke="#e0e0e0" stroke-width="0.9"/><path d="M984.6 132.60 h1.7" stroke="#e0e0e0" stroke-width="0.9"/><path d="M984.6 160.30 h1.7" stroke="#e0e0e0" stroke-width="0.9"/><path d="M984.6 188.00 h1.7" stroke="#e0e0e0" stroke-width="0.9"/><path d="M984.6 215.70 h1.7" stroke="#e0e0e0" stroke-width="0.9"/><path d="M984.6 243.40 h1.7" stroke="#e0e0e0" stroke-width="0.9"/><path d="M984.6 271.10 h1.7" stroke="#e0e0e0" stroke-width="0.9"/><path d="M984.6 298.80 h1.7" stroke="#e0e0e0" stroke-width="0.9"/><path d="M984.6 326.50 h1.7" stroke="#e0e0e0" stroke-width="0.9"/><path d="M984.6 354.20 h1.7" stroke="#e0e0e0" stroke-width="0.9"/><path d="M984.6 381.90 h1.7" stroke="#e0e0e0" stroke-width="0.9"/><path d="M984.6 409.60 h1.7" stroke="#e0e0e0" stroke-width="0.9"/><path d="M5.50 412.4 v3" stroke="#e0e0e0" stroke-width="0.9"/><path d="M58.17 412.4 v3" stroke="#e0e0e0" stroke-width="0.9"/><path d="M110.83 412.4 v3" stroke="#e0e0e0" stroke-width="0.9"/><path d="M163.50 412.4 v3" stroke="#e0e0e0" stroke-width="0.9"/><path d="M216.17 412.4 v3" stroke="#e0e0e0" stroke-width="0.9"/><path d="M268.83 412.4 v3" stroke="#e0e0e0" stroke-width="0.9"/><path d="M321.50 412.4 v3" stroke="#e0e0e0" stroke-width="0.9"/><path d="M374.17 412.4 v3" stroke="#e0e0e0" stroke-width="0.9"/><path d="M426.83 412.4 v3" stroke="#e0e0e0" stroke-width="0.9"/><path d="M479.50 412.4 v3" stroke="#e0e0e0" stroke-width="0.9"/><path d="M532.17 412.4 v3" stroke="#e0e0e0" stroke-width="0.9"/><path d="M584.83 412.4 v3" stroke="#e0e0e0" stroke-width="0.9"/><path d="M637.50 412.4 v3" stroke="#e0e0e0" stroke-width="0.9"/><path d="M690.17 412.4 v3" stroke="#e0e0e0" stroke-width="0.9"/><path d="M742.84 412.4 v3" stroke="#e0e0e0" stroke-width="0.9"/><path d="M795.50 412.4 v3" stroke="#e0e0e0" stroke-width="0.9"/><path d="M848.17 412.4 v3" stroke="#e0e0e0" stroke-width="0.9"/><path d="M900.84 412.4 v3" stroke="#e0e0e0" stroke-width="0.9"/><path d="M953.50 412.4 v3" stroke="#e0e0e0" stroke-width="0.9"/><path d="M7.3 95.3 h5.9 l-2.95 3.3z" fill="#f0f0f0"/><circle cx="974.9" cy="97.4" r="4.3" fill="none" stroke="#e8e8e8" stroke-width="0.9"/><circle cx="973.3" cy="96.3" r="0.7" fill="#e8e8e8"/><circle cx="976.5" cy="96.3" r="0.7" fill="#e8e8e8"/><path d="M972.6 98.6 q2.3 2 4.6 0" stroke="#e8e8e8" stroke-width="0.8" fill="none"/></svg>
<span class="t " style="left:988.10px;top:101.55px;font-size:8.20px;line-height:8.20px;color:#f0f0f0;transform:scaleX(0.9109);">0.97095</span>
<span class="t " style="left:988.10px;top:129.25px;font-size:8.20px;line-height:8.20px;color:#f0f0f0;transform:scaleX(0.9109);">0.97025</span>
<span class="t " style="left:988.10px;top:156.95px;font-size:8.20px;line-height:8.20px;color:#f0f0f0;transform:scaleX(0.9109);">0.96955</span>
<span class="t " style="left:988.10px;top:184.65px;font-size:8.20px;line-height:8.20px;color:#f0f0f0;transform:scaleX(0.9109);">0.96885</span>
<span class="t " style="left:988.10px;top:212.35px;font-size:8.20px;line-height:8.20px;color:#f0f0f0;transform:scaleX(0.9109);">0.96815</span>
<span class="t " style="left:988.10px;top:240.05px;font-size:8.20px;line-height:8.20px;color:#f0f0f0;transform:scaleX(0.9109);">0.96745</span>
<span class="t " style="left:988.10px;top:267.75px;font-size:8.20px;line-height:8.20px;color:#f0f0f0;transform:scaleX(0.9109);">0.96675</span>
<span class="t " style="left:988.10px;top:295.45px;font-size:8.20px;line-height:8.20px;color:#f0f0f0;transform:scaleX(0.9109);">0.96605</span>
<span class="t " style="left:988.10px;top:323.15px;font-size:8.20px;line-height:8.20px;color:#f0f0f0;transform:scaleX(0.9109);">0.96535</span>
<span class="t " style="left:988.10px;top:350.85px;font-size:8.20px;line-height:8.20px;color:#f0f0f0;transform:scaleX(0.9109);">0.96465</span>
<span class="t " style="left:988.10px;top:378.55px;font-size:8.20px;line-height:8.20px;color:#f0f0f0;transform:scaleX(0.9109);">0.96395</span>
<span class="t " style="left:988.10px;top:406.25px;font-size:8.20px;line-height:8.20px;color:#f0f0f0;transform:scaleX(0.9109);">0.96325</span>
<div class="abs" style="left:986.00px;top:217.20px;width:32.20px;height:9.10px;background:#6495ed;"></div>
<div class="abs" style="left:986.00px;top:350.40px;width:32.20px;height:9.30px;background:#ffffff;"></div>
<div class="abs" style="left:986.00px;top:376.10px;width:32.20px;height:9.20px;background:#ff69b4;"></div>
<span class="t " style="left:988.10px;top:218.75px;font-size:8.20px;line-height:8.20px;color:#04080f;-webkit-text-stroke:0.12px #04080f;transform:scaleX(0.9109);">0.96798</span>
<span class="t " style="left:988.10px;top:351.85px;font-size:8.20px;line-height:8.20px;color:#000;-webkit-text-stroke:0.12px #000;transform:scaleX(0.9109);">0.96462</span>
<span class="t " style="left:988.10px;top:377.55px;font-size:8.20px;line-height:8.20px;color:#10040a;-webkit-text-stroke:0.12px #10040a;transform:scaleX(0.9109);">0.96396</span>
<span class="t " style="left:3.90px;top:416.45px;font-size:8.20px;line-height:8.20px;color:#f0f0f0;transform:scaleX(0.9079);">18 Mar 2026</span>
<span class="t " style="left:56.57px;top:416.45px;font-size:8.20px;line-height:8.20px;color:#f0f0f0;transform:scaleX(0.9168);">18 Mar 17:40</span>
<span class="t " style="left:109.23px;top:416.45px;font-size:8.20px;line-height:8.20px;color:#f0f0f0;transform:scaleX(0.9168);">18 Mar 18:00</span>
<span class="t " style="left:161.90px;top:416.45px;font-size:8.20px;line-height:8.20px;color:#f0f0f0;transform:scaleX(0.9168);">18 Mar 18:20</span>
<span class="t " style="left:214.57px;top:416.45px;font-size:8.20px;line-height:8.20px;color:#f0f0f0;transform:scaleX(0.9168);">18 Mar 18:40</span>
<span class="t " style="left:267.23px;top:416.45px;font-size:8.20px;line-height:8.20px;color:#f0f0f0;transform:scaleX(0.9168);">18 Mar 19:00</span>
<span class="t " style="left:319.90px;top:416.45px;font-size:8.20px;line-height:8.20px;color:#f0f0f0;transform:scaleX(0.9168);">18 Mar 19:20</span>
<span class="t " style="left:372.57px;top:416.45px;font-size:8.20px;line-height:8.20px;color:#f0f0f0;transform:scaleX(0.9168);">18 Mar 19:40</span>
<span class="t " style="left:425.23px;top:416.45px;font-size:8.20px;line-height:8.20px;color:#f0f0f0;transform:scaleX(0.9168);">18 Mar 20:00</span>
<span class="t " style="left:477.90px;top:416.45px;font-size:8.20px;line-height:8.20px;color:#f0f0f0;transform:scaleX(0.9168);">18 Mar 20:20</span>
<span class="t " style="left:530.57px;top:416.45px;font-size:8.20px;line-height:8.20px;color:#f0f0f0;transform:scaleX(0.9168);">18 Mar 20:40</span>
<span class="t " style="left:583.23px;top:416.45px;font-size:8.20px;line-height:8.20px;color:#f0f0f0;transform:scaleX(0.9168);">18 Mar 21:00</span>
<span class="t " style="left:635.90px;top:416.45px;font-size:8.20px;line-height:8.20px;color:#f0f0f0;transform:scaleX(0.9168);">18 Mar 21:20</span>
<span class="t " style="left:688.57px;top:416.45px;font-size:8.20px;line-height:8.20px;color:#f0f0f0;transform:scaleX(0.9168);">18 Mar 21:40</span>
<span class="t " style="left:741.24px;top:416.45px;font-size:8.20px;line-height:8.20px;color:#f0f0f0;transform:scaleX(0.9168);">18 Mar 22:00</span>
<span class="t " style="left:793.90px;top:416.45px;font-size:8.20px;line-height:8.20px;color:#f0f0f0;transform:scaleX(0.9168);">18 Mar 22:20</span>
<span class="t " style="left:846.57px;top:416.45px;font-size:8.20px;line-height:8.20px;color:#f0f0f0;transform:scaleX(0.9168);">18 Mar 22:40</span>
<span class="t " style="left:899.24px;top:416.45px;font-size:8.20px;line-height:8.20px;color:#f0f0f0;transform:scaleX(0.9168);">18 Mar 23:00</span>
<span class="t " style="left:951.90px;top:416.45px;font-size:8.20px;line-height:8.20px;color:#f0f0f0;transform:scaleX(0.9168);">18 Mar 23:20</span>
<span class="t " style="left:17.20px;top:93.65px;font-size:8.20px;line-height:8.20px;color:#fff;transform:scaleX(0.9815);">AUDCAD,M5</span>
<span class="t " style="left:903.00px;top:94.05px;font-size:8.20px;line-height:8.20px;color:#fff;transform:scaleX(0.9571);">BALANCEA_Ver.S</span>
<span class="t " style="left:50.80px;top:193.45px;font-size:8.20px;line-height:8.20px;color:#e0e0e0;transform:scaleX(0.9536);">buy 0.12</span>
<span class="t " style="left:50.80px;top:314.45px;font-size:8.20px;line-height:8.20px;color:#e0e0e0;transform:scaleX(0.9168);">sell 0.04</span>
<span class="t " style="left:50.80px;top:341.55px;font-size:8.20px;line-height:8.20px;color:#e0e0e0;transform:scaleX(0.9536);">buy 0.21</span>
<div class="abs" style="left:0.00px;top:428.60px;width:1024.00px;height:217.40px;background:#f0f0f0;"></div>
<div class="abs" style="left:1.80px;top:444.40px;width:10.50px;height:179.20px;background:#bfd0e5;"></div>
<svg class="ic" style="left:3px;top:434px" width="8" height="8" viewBox="0 0 8 8"><path d="M1.2 1.4 L5.6 5.8 M5.6 1.4 L1.2 5.8" stroke="#111" stroke-width="1.3" fill="none"/></svg>
<div class="abs" style="left:13.30px;top:433.20px;width:1006.70px;height:172.00px;background:#fff;border-top:1px solid #c4c4c4;border-left:1px solid #b0b0b0;box-sizing:border-box;"></div>
<div class="abs" style="left:14.30px;top:470.06px;width:1005.70px;height:0.80px;background:#dcdcdc;"></div>
<div class="abs" style="left:14.30px;top:470.56px;width:1005.70px;height:16.36px;background:#f0f0f0;"></div>
<div class="abs" style="left:14.30px;top:486.42px;width:1005.70px;height:0.80px;background:#dcdcdc;"></div>
<div class="abs" style="left:14.30px;top:502.78px;width:1005.70px;height:0.80px;background:#dcdcdc;"></div>
<div class="abs" style="left:14.30px;top:503.28px;width:1005.70px;height:16.36px;background:#f0f0f0;"></div>
<div class="abs" style="left:14.30px;top:519.14px;width:1005.70px;height:0.80px;background:#dcdcdc;"></div>
<div class="abs" style="left:14.30px;top:535.50px;width:1005.70px;height:0.80px;background:#dcdcdc;"></div>
<div class="abs" style="left:14.30px;top:453.30px;width:1005.70px;height:0.90px;background:#d2d2d2;"></div>
<div class="abs" style="left:112.60px;top:434.20px;width:0.90px;height:19.50px;background:#e6e6e6;"></div>
<div class="abs" style="left:112.60px;top:454.20px;width:0.90px;height:81.80px;background:#e8e8e8;"></div>
<div class="abs" style="left:249.60px;top:434.20px;width:0.90px;height:19.50px;background:#e6e6e6;"></div>
<div class="abs" style="left:249.60px;top:454.20px;width:0.90px;height:81.80px;background:#e8e8e8;"></div>
<div class="abs" style="left:318.10px;top:434.20px;width:0.90px;height:19.50px;background:#e6e6e6;"></div>
<div class="abs" style="left:318.10px;top:454.20px;width:0.90px;height:81.80px;background:#e8e8e8;"></div>
<div class="abs" style="left:371.10px;top:434.20px;width:0.90px;height:19.50px;background:#e6e6e6;"></div>
<div class="abs" style="left:371.10px;top:454.20px;width:0.90px;height:81.80px;background:#e8e8e8;"></div>
<div class="abs" style="left:440.10px;top:434.20px;width:0.90px;height:19.50px;background:#e6e6e6;"></div>
<div class="abs" style="left:440.10px;top:454.20px;width:0.90px;height:81.80px;background:#e8e8e8;"></div>
<div class="abs" style="left:516.10px;top:434.20px;width:0.90px;height:19.50px;background:#e6e6e6;"></div>
<div class="abs" style="left:516.10px;top:454.20px;width:0.90px;height:81.80px;background:#e8e8e8;"></div>
<div class="abs" style="left:592.85px;top:434.20px;width:0.90px;height:19.50px;background:#e6e6e6;"></div>
<div class="abs" style="left:592.85px;top:454.20px;width:0.90px;height:81.80px;background:#e8e8e8;"></div>
<div class="abs" style="left:669.60px;top:434.20px;width:0.90px;height:19.50px;background:#e6e6e6;"></div>
<div class="abs" style="left:669.60px;top:454.20px;width:0.90px;height:81.80px;background:#e8e8e8;"></div>
<div class="abs" style="left:745.85px;top:434.20px;width:0.90px;height:19.50px;background:#e6e6e6;"></div>
<div class="abs" style="left:745.85px;top:454.20px;width:0.90px;height:81.80px;background:#e8e8e8;"></div>
<div class="abs" style="left:822.60px;top:434.20px;width:0.90px;height:19.50px;background:#e6e6e6;"></div>
<div class="abs" style="left:822.60px;top:454.20px;width:0.90px;height:81.80px;background:#e8e8e8;"></div>
<div class="abs" style="left:899.35px;top:434.20px;width:0.90px;height:19.50px;background:#e6e6e6;"></div>
<div class="abs" style="left:899.35px;top:454.20px;width:0.90px;height:81.80px;background:#e8e8e8;"></div>
<div class="abs" style="left:14.30px;top:536.00px;width:1005.70px;height:15.60px;background:#cfcfcf;"></div>
<span class="j" style="left:19.50px;top:438.62px;font-size:9.90px;line-height:9.90px;color:#1c1c1c;transform:scaleX(0.965);">注文番号</span>
<svg class="ic" style="left:67px;top:439px" width="6" height="8" viewBox="0 0 6 8"><path d="M1.4 6.4 L4.2 2" stroke="#8a8a8a" stroke-width="0.8"/></svg>
<span class="j" style="left:227.00px;top:438.62px;font-size:9.90px;line-height:9.90px;color:#1c1c1c;transform:scaleX(0.949);">時間</span>
<span class="j" style="left:276.00px;top:438.62px;font-size:9.90px;line-height:9.90px;color:#1c1c1c;transform:scaleX(0.965);">取引種別</span>
<span class="j" style="left:348.70px;top:438.62px;font-size:9.90px;line-height:9.90px;color:#1c1c1c;transform:scaleX(0.949);">数量</span>
<span class="j" style="left:401.60px;top:438.62px;font-size:9.90px;line-height:9.90px;color:#1c1c1c;transform:scaleX(0.889);">通貨ペア</span>
<span class="j" style="left:494.00px;top:438.62px;font-size:9.90px;line-height:9.90px;color:#1c1c1c;transform:scaleX(0.949);">価格</span>
<span class="t " style="left:573.10px;top:438.04px;font-size:10.30px;line-height:10.30px;color:#1c1c1c;transform:scaleX(0.8419);">(S...</span>
<span class="j" style="left:524.80px;top:438.62px;font-size:9.90px;line-height:9.90px;color:#1c1c1c;transform:scaleX(0.980);">決済逆指値</span>
<span class="t " style="left:643.70px;top:438.04px;font-size:10.30px;line-height:10.30px;color:#1c1c1c;transform:scaleX(0.9308);">(T/P)</span>
<span class="j" style="left:605.70px;top:438.62px;font-size:9.90px;line-height:9.90px;color:#1c1c1c;transform:scaleX(0.965);">決済指値</span>
<span class="j" style="left:723.00px;top:438.62px;font-size:9.90px;line-height:9.90px;color:#1c1c1c;transform:scaleX(0.949);">価格</span>
<span class="j" style="left:790.50px;top:438.62px;font-size:9.90px;line-height:9.90px;color:#1c1c1c;transform:scaleX(0.960);">手数料</span>
<span class="j" style="left:866.70px;top:438.62px;font-size:9.90px;line-height:9.90px;color:#1c1c1c;transform:scaleX(0.745);">スワップ</span>
<span class="j" style="left:995.10px;top:438.62px;font-size:9.90px;line-height:9.90px;color:#1c1c1c;transform:scaleX(0.980);">損益</span>
<span class="t " style="left:166.43px;top:457.38px;font-size:10.00px;line-height:10.00px;color:#141414;-webkit-text-stroke:0.20px #141414;transform:scaleX(0.8890);">2026.03.18 08:09:42</span>
<span class="t " style="left:300.44px;top:457.38px;font-size:10.00px;line-height:10.00px;color:#141414;-webkit-text-stroke:0.20px #141414;transform:scaleX(0.9650);">buy</span>
<span class="t " style="left:352.50px;top:457.38px;font-size:10.00px;line-height:10.00px;color:#141414;-webkit-text-stroke:0.20px #141414;transform:scaleX(0.8890);">0.04</span>
<span class="t " style="left:406.14px;top:457.38px;font-size:10.00px;line-height:10.00px;color:#141414;-webkit-text-stroke:0.20px #141414;transform:scaleX(0.9650);">audcad</span>
<span class="t " style="left:481.86px;top:457.38px;font-size:10.00px;line-height:10.00px;color:#141414;-webkit-text-stroke:0.20px #141414;transform:scaleX(0.8890);">0.97583</span>
<span class="t " style="left:558.86px;top:457.38px;font-size:10.00px;line-height:10.00px;color:#141414;-webkit-text-stroke:0.20px #141414;transform:scaleX(0.8890);">0.00000</span>
<span class="t " style="left:635.36px;top:457.38px;font-size:10.00px;line-height:10.00px;color:#141414;-webkit-text-stroke:0.20px #141414;transform:scaleX(0.8890);">0.00000</span>
<span class="t " style="left:711.86px;top:457.38px;font-size:10.00px;line-height:10.00px;color:#141414;-webkit-text-stroke:0.20px #141414;transform:scaleX(0.8890);">0.96462</span>
<span class="t " style="left:816.36px;top:457.38px;font-size:10.00px;line-height:10.00px;color:#141414;-webkit-text-stroke:0.20px #141414;transform:scaleX(0.8890);">0</span>
<span class="t " style="left:893.06px;top:457.38px;font-size:10.00px;line-height:10.00px;color:#141414;-webkit-text-stroke:0.20px #141414;transform:scaleX(0.8890);">0</span>
<span class="t " style="left:974.79px;top:457.38px;font-size:10.00px;line-height:10.00px;color:#141414;-webkit-text-stroke:0.20px #141414;transform:scaleX(0.8890);">-5 215</span>
<span class="t " style="left:166.43px;top:473.74px;font-size:10.00px;line-height:10.00px;color:#141414;-webkit-text-stroke:0.20px #141414;transform:scaleX(0.8890);">2026.03.18 13:27:23</span>
<span class="t " style="left:300.44px;top:473.74px;font-size:10.00px;line-height:10.00px;color:#141414;-webkit-text-stroke:0.20px #141414;transform:scaleX(0.9650);">buy</span>
<span class="t " style="left:352.50px;top:473.74px;font-size:10.00px;line-height:10.00px;color:#141414;-webkit-text-stroke:0.20px #141414;transform:scaleX(0.8890);">0.06</span>
<span class="t " style="left:406.14px;top:473.74px;font-size:10.00px;line-height:10.00px;color:#141414;-webkit-text-stroke:0.20px #141414;transform:scaleX(0.9650);">audcad</span>
<span class="t " style="left:481.86px;top:473.74px;font-size:10.00px;line-height:10.00px;color:#141414;-webkit-text-stroke:0.20px #141414;transform:scaleX(0.8890);">0.97216</span>
<span class="t " style="left:558.86px;top:473.74px;font-size:10.00px;line-height:10.00px;color:#141414;-webkit-text-stroke:0.20px #141414;transform:scaleX(0.8890);">0.00000</span>
<span class="t " style="left:635.36px;top:473.74px;font-size:10.00px;line-height:10.00px;color:#141414;-webkit-text-stroke:0.20px #141414;transform:scaleX(0.8890);">0.00000</span>
<span class="t " style="left:711.86px;top:473.74px;font-size:10.00px;line-height:10.00px;color:#141414;-webkit-text-stroke:0.20px #141414;transform:scaleX(0.8890);">0.96462</span>
<span class="t " style="left:816.36px;top:473.74px;font-size:10.00px;line-height:10.00px;color:#141414;-webkit-text-stroke:0.20px #141414;transform:scaleX(0.8890);">0</span>
<span class="t " style="left:893.06px;top:473.74px;font-size:10.00px;line-height:10.00px;color:#141414;-webkit-text-stroke:0.20px #141414;transform:scaleX(0.8890);">0</span>
<span class="t " style="left:974.79px;top:473.74px;font-size:10.00px;line-height:10.00px;color:#141414;-webkit-text-stroke:0.20px #141414;transform:scaleX(0.8890);">-5 262</span>
<span class="t " style="left:166.43px;top:490.10px;font-size:10.00px;line-height:10.00px;color:#141414;-webkit-text-stroke:0.20px #141414;transform:scaleX(0.8890);">2026.03.18 14:46:05</span>
<span class="t " style="left:300.44px;top:490.10px;font-size:10.00px;line-height:10.00px;color:#141414;-webkit-text-stroke:0.20px #141414;transform:scaleX(0.9650);">buy</span>
<span class="t " style="left:352.50px;top:490.10px;font-size:10.00px;line-height:10.00px;color:#141414;-webkit-text-stroke:0.20px #141414;transform:scaleX(0.8890);">0.12</span>
<span class="t " style="left:406.14px;top:490.10px;font-size:10.00px;line-height:10.00px;color:#141414;-webkit-text-stroke:0.20px #141414;transform:scaleX(0.9650);">audcad</span>
<span class="t " style="left:481.86px;top:490.10px;font-size:10.00px;line-height:10.00px;color:#141414;-webkit-text-stroke:0.20px #141414;transform:scaleX(0.8890);">0.96851</span>
<span class="t " style="left:558.86px;top:490.10px;font-size:10.00px;line-height:10.00px;color:#141414;-webkit-text-stroke:0.20px #141414;transform:scaleX(0.8890);">0.00000</span>
<span class="t " style="left:635.36px;top:490.10px;font-size:10.00px;line-height:10.00px;color:#141414;-webkit-text-stroke:0.20px #141414;transform:scaleX(0.8890);">0.00000</span>
<span class="t " style="left:711.86px;top:490.10px;font-size:10.00px;line-height:10.00px;color:#141414;-webkit-text-stroke:0.20px #141414;transform:scaleX(0.8890);">0.96462</span>
<span class="t " style="left:816.36px;top:490.10px;font-size:10.00px;line-height:10.00px;color:#141414;-webkit-text-stroke:0.20px #141414;transform:scaleX(0.8890);">0</span>
<span class="t " style="left:893.06px;top:490.10px;font-size:10.00px;line-height:10.00px;color:#141414;-webkit-text-stroke:0.20px #141414;transform:scaleX(0.8890);">0</span>
<span class="t " style="left:974.79px;top:490.10px;font-size:10.00px;line-height:10.00px;color:#141414;-webkit-text-stroke:0.20px #141414;transform:scaleX(0.8890);">-5 429</span>
<span class="t " style="left:166.43px;top:506.46px;font-size:10.00px;line-height:10.00px;color:#141414;-webkit-text-stroke:0.20px #141414;transform:scaleX(0.8890);">2026.03.18 22:00:00</span>
<span class="t " style="left:301.52px;top:506.46px;font-size:10.00px;line-height:10.00px;color:#141414;-webkit-text-stroke:0.20px #141414;transform:scaleX(0.9650);">sell</span>
<span class="t " style="left:352.50px;top:506.46px;font-size:10.00px;line-height:10.00px;color:#141414;-webkit-text-stroke:0.20px #141414;transform:scaleX(0.8890);">0.04</span>
<span class="t " style="left:406.14px;top:506.46px;font-size:10.00px;line-height:10.00px;color:#141414;-webkit-text-stroke:0.20px #141414;transform:scaleX(0.9650);">audcad</span>
<span class="t " style="left:481.86px;top:506.46px;font-size:10.00px;line-height:10.00px;color:#141414;-webkit-text-stroke:0.20px #141414;transform:scaleX(0.8890);">0.96546</span>
<span class="t " style="left:558.86px;top:506.46px;font-size:10.00px;line-height:10.00px;color:#141414;-webkit-text-stroke:0.20px #141414;transform:scaleX(0.8890);">0.00000</span>
<span class="t " style="left:635.36px;top:506.46px;font-size:10.00px;line-height:10.00px;color:#141414;-webkit-text-stroke:0.20px #141414;transform:scaleX(0.8890);">0.00000</span>
<span class="t " style="left:711.86px;top:506.46px;font-size:10.00px;line-height:10.00px;color:#141414;-webkit-text-stroke:0.20px #141414;transform:scaleX(0.8890);">0.96672</span>
<span class="t " style="left:816.36px;top:506.46px;font-size:10.00px;line-height:10.00px;color:#141414;-webkit-text-stroke:0.20px #141414;transform:scaleX(0.8890);">0</span>
<span class="t " style="left:893.06px;top:506.46px;font-size:10.00px;line-height:10.00px;color:#141414;-webkit-text-stroke:0.20px #141414;transform:scaleX(0.8890);">0</span>
<span class="t " style="left:982.21px;top:506.46px;font-size:10.00px;line-height:10.00px;color:#141414;-webkit-text-stroke:0.20px #141414;transform:scaleX(0.8890);">-587</span>
<span class="t " style="left:166.43px;top:522.82px;font-size:10.00px;line-height:10.00px;color:#141414;-webkit-text-stroke:0.20px #141414;transform:scaleX(0.8890);">2026.03.18 22:23:26</span>
<span class="t " style="left:300.44px;top:522.82px;font-size:10.00px;line-height:10.00px;color:#141414;-webkit-text-stroke:0.20px #141414;transform:scaleX(0.9650);">buy</span>
<span class="t " style="left:352.50px;top:522.82px;font-size:10.00px;line-height:10.00px;color:#141414;-webkit-text-stroke:0.20px #141414;transform:scaleX(0.8890);">0.21</span>
<span class="t " style="left:406.14px;top:522.82px;font-size:10.00px;line-height:10.00px;color:#141414;-webkit-text-stroke:0.20px #141414;transform:scaleX(0.9650);">audcad</span>
<span class="t " style="left:481.86px;top:522.82px;font-size:10.00px;line-height:10.00px;color:#141414;-webkit-text-stroke:0.20px #141414;transform:scaleX(0.8890);">0.96478</span>
<span class="t " style="left:558.86px;top:522.82px;font-size:10.00px;line-height:10.00px;color:#141414;-webkit-text-stroke:0.20px #141414;transform:scaleX(0.8890);">0.00000</span>
<span class="t " style="left:635.36px;top:522.82px;font-size:10.00px;line-height:10.00px;color:#141414;-webkit-text-stroke:0.20px #141414;transform:scaleX(0.8890);">0.00000</span>
<span class="t " style="left:711.86px;top:522.82px;font-size:10.00px;line-height:10.00px;color:#141414;-webkit-text-stroke:0.20px #141414;transform:scaleX(0.8890);">0.96462</span>
<span class="t " style="left:816.36px;top:522.82px;font-size:10.00px;line-height:10.00px;color:#141414;-webkit-text-stroke:0.20px #141414;transform:scaleX(0.8890);">0</span>
<span class="t " style="left:893.06px;top:522.82px;font-size:10.00px;line-height:10.00px;color:#141414;-webkit-text-stroke:0.20px #141414;transform:scaleX(0.8890);">0</span>
<span class="t " style="left:982.21px;top:522.82px;font-size:10.00px;line-height:10.00px;color:#141414;-webkit-text-stroke:0.20px #141414;transform:scaleX(0.8890);">-391</span>
<svg class="ic" style="left:0;top:433px" width="1024" height="130" viewBox="0 433 1024 130"><path d="M1008.70 459.90 l5 5 m0 -5 l-5 5" stroke="#9c9c9c" stroke-width="1.5" fill="none"/><path d="M17 456.40 h5.4 l3 3 v7.8 h-8.4z" fill="#fff" stroke="#6e6e6e" stroke-width="0.9" stroke-linejoin="round"/><path d="M17.6 467.80 h8.2 v-7" fill="none" stroke="#b8b8b8" stroke-width="0.7"/><path d="M22.3 456.50 v3.1 h3" fill="none" stroke="#6e6e6e" stroke-width="0.7"/><circle cx="25" cy="465.70" r="2.35" fill="#2f8fe8" stroke="#1668c0" stroke-width="0.6"/><circle cx="24.5" cy="465.10" r="0.9" fill="#fff" opacity=".45"/><path d="M1008.70 476.26 l5 5 m0 -5 l-5 5" stroke="#9c9c9c" stroke-width="1.5" fill="none"/><path d="M17 472.76 h5.4 l3 3 v7.8 h-8.4z" fill="#fff" stroke="#6e6e6e" stroke-width="0.9" stroke-linejoin="round"/><path d="M17.6 484.16 h8.2 v-7" fill="none" stroke="#b8b8b8" stroke-width="0.7"/><path d="M22.3 472.86 v3.1 h3" fill="none" stroke="#6e6e6e" stroke-width="0.7"/><circle cx="25" cy="482.06" r="2.35" fill="#2f8fe8" stroke="#1668c0" stroke-width="0.6"/><circle cx="24.5" cy="481.46" r="0.9" fill="#fff" opacity=".45"/><path d="M1008.70 492.62 l5 5 m0 -5 l-5 5" stroke="#9c9c9c" stroke-width="1.5" fill="none"/><path d="M17 489.12 h5.4 l3 3 v7.8 h-8.4z" fill="#fff" stroke="#6e6e6e" stroke-width="0.9" stroke-linejoin="round"/><path d="M17.6 500.52 h8.2 v-7" fill="none" stroke="#b8b8b8" stroke-width="0.7"/><path d="M22.3 489.22 v3.1 h3" fill="none" stroke="#6e6e6e" stroke-width="0.7"/><circle cx="25" cy="498.42" r="2.35" fill="#2f8fe8" stroke="#1668c0" stroke-width="0.6"/><circle cx="24.5" cy="497.82" r="0.9" fill="#fff" opacity=".45"/><path d="M1008.70 508.98 l5 5 m0 -5 l-5 5" stroke="#9c9c9c" stroke-width="1.5" fill="none"/><path d="M17 505.48 h5.4 l3 3 v7.8 h-8.4z" fill="#fff" stroke="#6e6e6e" stroke-width="0.9" stroke-linejoin="round"/><path d="M17.6 516.88 h8.2 v-7" fill="none" stroke="#b8b8b8" stroke-width="0.7"/><path d="M22.3 505.58 v3.1 h3" fill="none" stroke="#6e6e6e" stroke-width="0.7"/><circle cx="25" cy="514.78" r="2.35" fill="#f05a28" stroke="#c03a10" stroke-width="0.6"/><circle cx="24.5" cy="514.18" r="0.9" fill="#fff" opacity=".45"/><path d="M1008.70 525.34 l5 5 m0 -5 l-5 5" stroke="#9c9c9c" stroke-width="1.5" fill="none"/><path d="M17 521.84 h5.4 l3 3 v7.8 h-8.4z" fill="#fff" stroke="#6e6e6e" stroke-width="0.9" stroke-linejoin="round"/><path d="M17.6 533.24 h8.2 v-7" fill="none" stroke="#b8b8b8" stroke-width="0.7"/><path d="M22.3 521.94 v3.1 h3" fill="none" stroke="#6e6e6e" stroke-width="0.7"/><circle cx="25" cy="531.14" r="2.35" fill="#2f8fe8" stroke="#1668c0" stroke-width="0.6"/><circle cx="24.5" cy="530.54" r="0.9" fill="#fff" opacity=".45"/><rect x="16.8" y="538.50" width="9.2" height="10.4" rx="1.2" fill="#fff" stroke="#8a8a8a" stroke-width="0.8"/><path d="M20.5 540.60 h1.9 v2.4 h1.7 l-2.65 3 l-2.65 -3 h1.7z" fill="#e23a1a" stroke="#c42a10" stroke-width="0.5" stroke-linejoin="round"/></svg>
<span class="j" style="left:32.30px;top:538.80px;font-size:10.40px;line-height:10.40px;color:#111;font-weight:bold;transform:scaleX(0.976);">残高</span>
<span class="t " style="left:52.00px;top:538.98px;font-size:10.20px;line-height:10.20px;color:#111;font-weight:bold;transform:scaleX(0.8538);">:</span>
<span class="t " style="left:56.90px;top:538.98px;font-size:10.20px;line-height:10.20px;color:#111;font-weight:bold;transform:scaleX(0.8979);">1 206 080 JPY</span>
<span class="j" style="left:124.10px;top:538.80px;font-size:10.40px;line-height:10.40px;color:#111;font-weight:bold;transform:scaleX(0.942);">有効証拠金</span>
<span class="t " style="left:172.80px;top:538.98px;font-size:10.20px;line-height:10.20px;color:#111;font-weight:bold;transform:scaleX(0.8538);">:</span>
<span class="t " style="left:178.20px;top:538.98px;font-size:10.20px;line-height:10.20px;color:#111;font-weight:bold;transform:scaleX(0.8661);">1 189 196</span>
<span class="j" style="left:223.80px;top:538.80px;font-size:10.40px;line-height:10.40px;color:#111;font-weight:bold;transform:scaleX(0.928);">必要証拠金</span>
<span class="t " style="left:271.40px;top:538.98px;font-size:10.20px;line-height:10.20px;color:#111;font-weight:bold;transform:scaleX(0.8538);">:</span>
<span class="t " style="left:277.80px;top:538.98px;font-size:10.20px;line-height:10.20px;color:#111;font-weight:bold;transform:scaleX(0.9559);">4 386</span>
<span class="j" style="left:308.30px;top:538.80px;font-size:10.40px;line-height:10.40px;color:#111;font-weight:bold;transform:scaleX(0.944);">余剰証拠金</span>
<span class="t " style="left:356.80px;top:538.98px;font-size:10.20px;line-height:10.20px;color:#111;font-weight:bold;transform:scaleX(0.8538);">:</span>
<span class="t " style="left:362.40px;top:538.98px;font-size:10.20px;line-height:10.20px;color:#111;font-weight:bold;transform:scaleX(0.8771);">1 184 810</span>
<span class="j" style="left:407.40px;top:538.80px;font-size:10.40px;line-height:10.40px;color:#111;font-weight:bold;transform:scaleX(0.952);">証拠金維持率</span>
<span class="t " style="left:466.50px;top:538.98px;font-size:10.20px;line-height:10.20px;color:#111;font-weight:bold;transform:scaleX(0.8538);">:</span>
<span class="t " style="left:471.80px;top:538.98px;font-size:10.20px;line-height:10.20px;color:#111;font-weight:bold;transform:scaleX(0.9011);">27113.45%</span>
<span class="t " style="left:966.50px;top:538.98px;font-size:10.20px;line-height:10.20px;color:#111;font-weight:bold;transform:scaleX(0.9684);">-16 884</span>
<div class="abs" style="left:13.30px;top:604.80px;width:1006.10px;height:1.00px;background:#4a4a4a;"></div>
<div class="abs" style="left:15.5px;top:604.6px;width:36.4px;height:16.2px;box-sizing:border-box;background:#fff;border:1.1px solid #3a3a3a;border-top:none"></div>
<span class="j" style="left:25.00px;top:607.82px;font-size:9.90px;line-height:9.90px;color:#000;transform:scaleX(0.899);">取引</span>
<span class="j" style="left:60.75px;top:607.82px;font-size:9.90px;line-height:9.90px;color:#6c6c6c;transform:scaleX(0.965);">運用比率</span>
<span class="j" style="left:117.50px;top:607.82px;font-size:9.90px;line-height:9.90px;color:#6c6c6c;transform:scaleX(0.952);">口座履歴</span>
<span class="j" style="left:173.00px;top:607.82px;font-size:9.90px;line-height:9.90px;color:#6c6c6c;transform:scaleX(0.687);">ニュース</span>
<span class="j" style="left:217.00px;top:607.82px;font-size:9.90px;line-height:9.90px;color:#6c6c6c;transform:scaleX(0.790);">アラーム設定</span>
<span class="j" style="left:280.50px;top:607.82px;font-size:9.90px;line-height:9.90px;color:#6c6c6c;transform:scaleX(0.735);">メールボックス</span>
<span class="j" style="left:353.75px;top:607.82px;font-size:9.90px;line-height:9.90px;color:#6c6c6c;transform:scaleX(0.686);">マーケット</span>
<span class="j" style="left:418.75px;top:607.82px;font-size:9.90px;line-height:9.90px;color:#6c6c6c;transform:scaleX(0.894);">記事</span>
<span class="j" style="left:463.75px;top:607.82px;font-size:9.90px;line-height:9.90px;color:#6c6c6c;transform:scaleX(0.696);">ライブラリ</span>
<span class="j" style="left:515.50px;top:607.82px;font-size:9.90px;line-height:9.90px;color:#6c6c6c;transform:scaleX(0.731);">エキスパート</span>
<span class="j" style="left:576.25px;top:607.82px;font-size:9.90px;line-height:9.90px;color:#6c6c6c;transform:scaleX(0.965);">操作履歴</span>
<div class="abs" style="left:107.60px;top:607.60px;width:0.90px;height:11.40px;background:#6a6a6a;"></div>
<div class="abs" style="left:163.35px;top:607.60px;width:0.90px;height:11.40px;background:#6a6a6a;"></div>
<div class="abs" style="left:208.10px;top:607.60px;width:0.90px;height:11.40px;background:#6a6a6a;"></div>
<div class="abs" style="left:272.10px;top:607.60px;width:0.90px;height:11.40px;background:#6a6a6a;"></div>
<div class="abs" style="left:345.85px;top:607.60px;width:0.90px;height:11.40px;background:#6a6a6a;"></div>
<div class="abs" style="left:410.10px;top:607.60px;width:0.90px;height:11.40px;background:#6a6a6a;"></div>
<div class="abs" style="left:455.85px;top:607.60px;width:0.90px;height:11.40px;background:#6a6a6a;"></div>
<div class="abs" style="left:507.10px;top:607.60px;width:0.90px;height:11.40px;background:#6a6a6a;"></div>
<div class="abs" style="left:567.10px;top:607.60px;width:0.90px;height:11.40px;background:#6a6a6a;"></div>
<div class="abs" style="left:623.35px;top:607.60px;width:0.90px;height:11.40px;background:#6a6a6a;"></div>
<span class="t " style="left:333.90px;top:613.63px;font-size:7.40px;line-height:7.40px;color:#e01010;-webkit-text-stroke:0.15px #e01010;transform:scaleX(0.8990);">6</span>
<span class="t " style="left:390.50px;top:613.63px;font-size:7.40px;line-height:7.40px;color:#e01010;-webkit-text-stroke:0.15px #e01010;transform:scaleX(0.8747);">105</span>
<span class="t " style="left:440.00px;top:613.63px;font-size:7.40px;line-height:7.40px;color:#e01010;-webkit-text-stroke:0.15px #e01010;transform:scaleX(0.9112);">30</span>
<span class="j" style="left:0;top:0;font-size:9.80px;line-height:9.80px;color:#1c1c1c;transform-origin:0 0;transform:translate(10.6px,621.4px) rotate(-90deg) translate(0,-8.29px) scaleX(0.745);">ターミナル</span>
<div class="abs" style="left:0.00px;top:624.60px;width:1022.00px;height:0.90px;background:#d0d0d0;"></div>
<span class="t " style="left:2.70px;top:631.89px;font-size:10.40px;line-height:10.40px;color:#111;-webkit-text-stroke:0.20px #111;transform:scaleX(0.7498);">F1</span>
<span class="j" style="left:12.20px;top:631.28px;font-size:10.90px;line-height:10.90px;color:#111;transform:scaleX(0.744);">キーでヘルプが表示されます</span>
<div class="abs" style="left:437.60px;top:628.40px;width:0.90px;height:16.40px;background:#a6a6a6;"></div>
<div class="abs" style="left:532.85px;top:628.40px;width:0.90px;height:16.40px;background:#a6a6a6;"></div>
<div class="abs" style="left:617.10px;top:628.40px;width:0.90px;height:16.40px;background:#a6a6a6;"></div>
<div class="abs" style="left:675.85px;top:628.40px;width:0.90px;height:16.40px;background:#a6a6a6;"></div>
<div class="abs" style="left:790.10px;top:628.40px;width:0.90px;height:16.40px;background:#a6a6a6;"></div>
<div class="abs" style="left:847.10px;top:628.40px;width:0.90px;height:16.40px;background:#a6a6a6;"></div>
<div class="abs" style="left:901.35px;top:628.40px;width:0.90px;height:16.40px;background:#a6a6a6;"></div>
<span class="t " style="left:443.00px;top:631.67px;font-size:9.60px;line-height:9.60px;color:#111;transform:scaleX(1.0290);">Default</span>
<span class="t " style="left:928.50px;top:631.87px;font-size:9.40px;line-height:9.40px;color:#111;transform:scaleX(0.9839);">690466/501 kb</span>
<svg class="ic" style="left:0;top:625px" width="1024" height="21" viewBox="0 625 1024 21"><rect x="906.40" y="631.2" width="1.2" height="11" fill="#7f9c2e"/><rect x="906.40" y="640.00" width="1.2" height="2.20" fill="#1d5f96"/><rect x="908.33" y="631.2" width="1.2" height="11" fill="#7f9c2e"/><rect x="908.33" y="639.07" width="1.2" height="3.13" fill="#1d5f96"/><rect x="910.26" y="631.2" width="1.2" height="11" fill="#7f9c2e"/><rect x="910.26" y="638.14" width="1.2" height="4.06" fill="#1d5f96"/><rect x="912.19" y="631.2" width="1.2" height="11" fill="#7f9c2e"/><rect x="912.19" y="637.21" width="1.2" height="4.99" fill="#1d5f96"/><rect x="914.12" y="631.2" width="1.2" height="11" fill="#7f9c2e"/><rect x="914.12" y="636.28" width="1.2" height="5.92" fill="#1d5f96"/><rect x="916.05" y="631.2" width="1.2" height="11" fill="#7f9c2e"/><rect x="916.05" y="635.35" width="1.2" height="6.85" fill="#1d5f96"/><rect x="917.98" y="631.2" width="1.2" height="11" fill="#7f9c2e"/><rect x="917.98" y="634.42" width="1.2" height="7.78" fill="#1d5f96"/><rect x="919.91" y="631.2" width="1.2" height="11" fill="#7f9c2e"/><rect x="919.91" y="633.49" width="1.2" height="8.71" fill="#1d5f96"/><rect x="921.84" y="631.2" width="1.2" height="11" fill="#7f9c2e"/><rect x="921.84" y="632.56" width="1.2" height="9.64" fill="#1d5f96"/><rect x="923.77" y="631.2" width="1.2" height="11" fill="#7f9c2e"/><rect x="923.77" y="631.63" width="1.2" height="10.57" fill="#1d5f96"/><path d="M1011.5 644.6 L1021 635.1 M1014.5 644.6 L1021 638.1 M1017.5 644.6 L1021 641.1" stroke="#a8a8a8" stroke-width="0.9" fill="none"/></svg>
<div class="abs" style="left:0.00px;top:0.00px;width:1024.00px;height:0.90px;background:#2f3d50;"></div>
<div class="abs" style="left:0.00px;top:0.00px;width:1.10px;height:646.00px;background:#2f3d50;"></div>
<div class="abs" style="left:1022.80px;top:0.00px;width:1.20px;height:646.00px;background:#2f3d50;"></div>
<div class="abs" style="left:0.00px;top:644.90px;width:1024.00px;height:1.10px;background:#2f3d50;"></div>
</body></html>
